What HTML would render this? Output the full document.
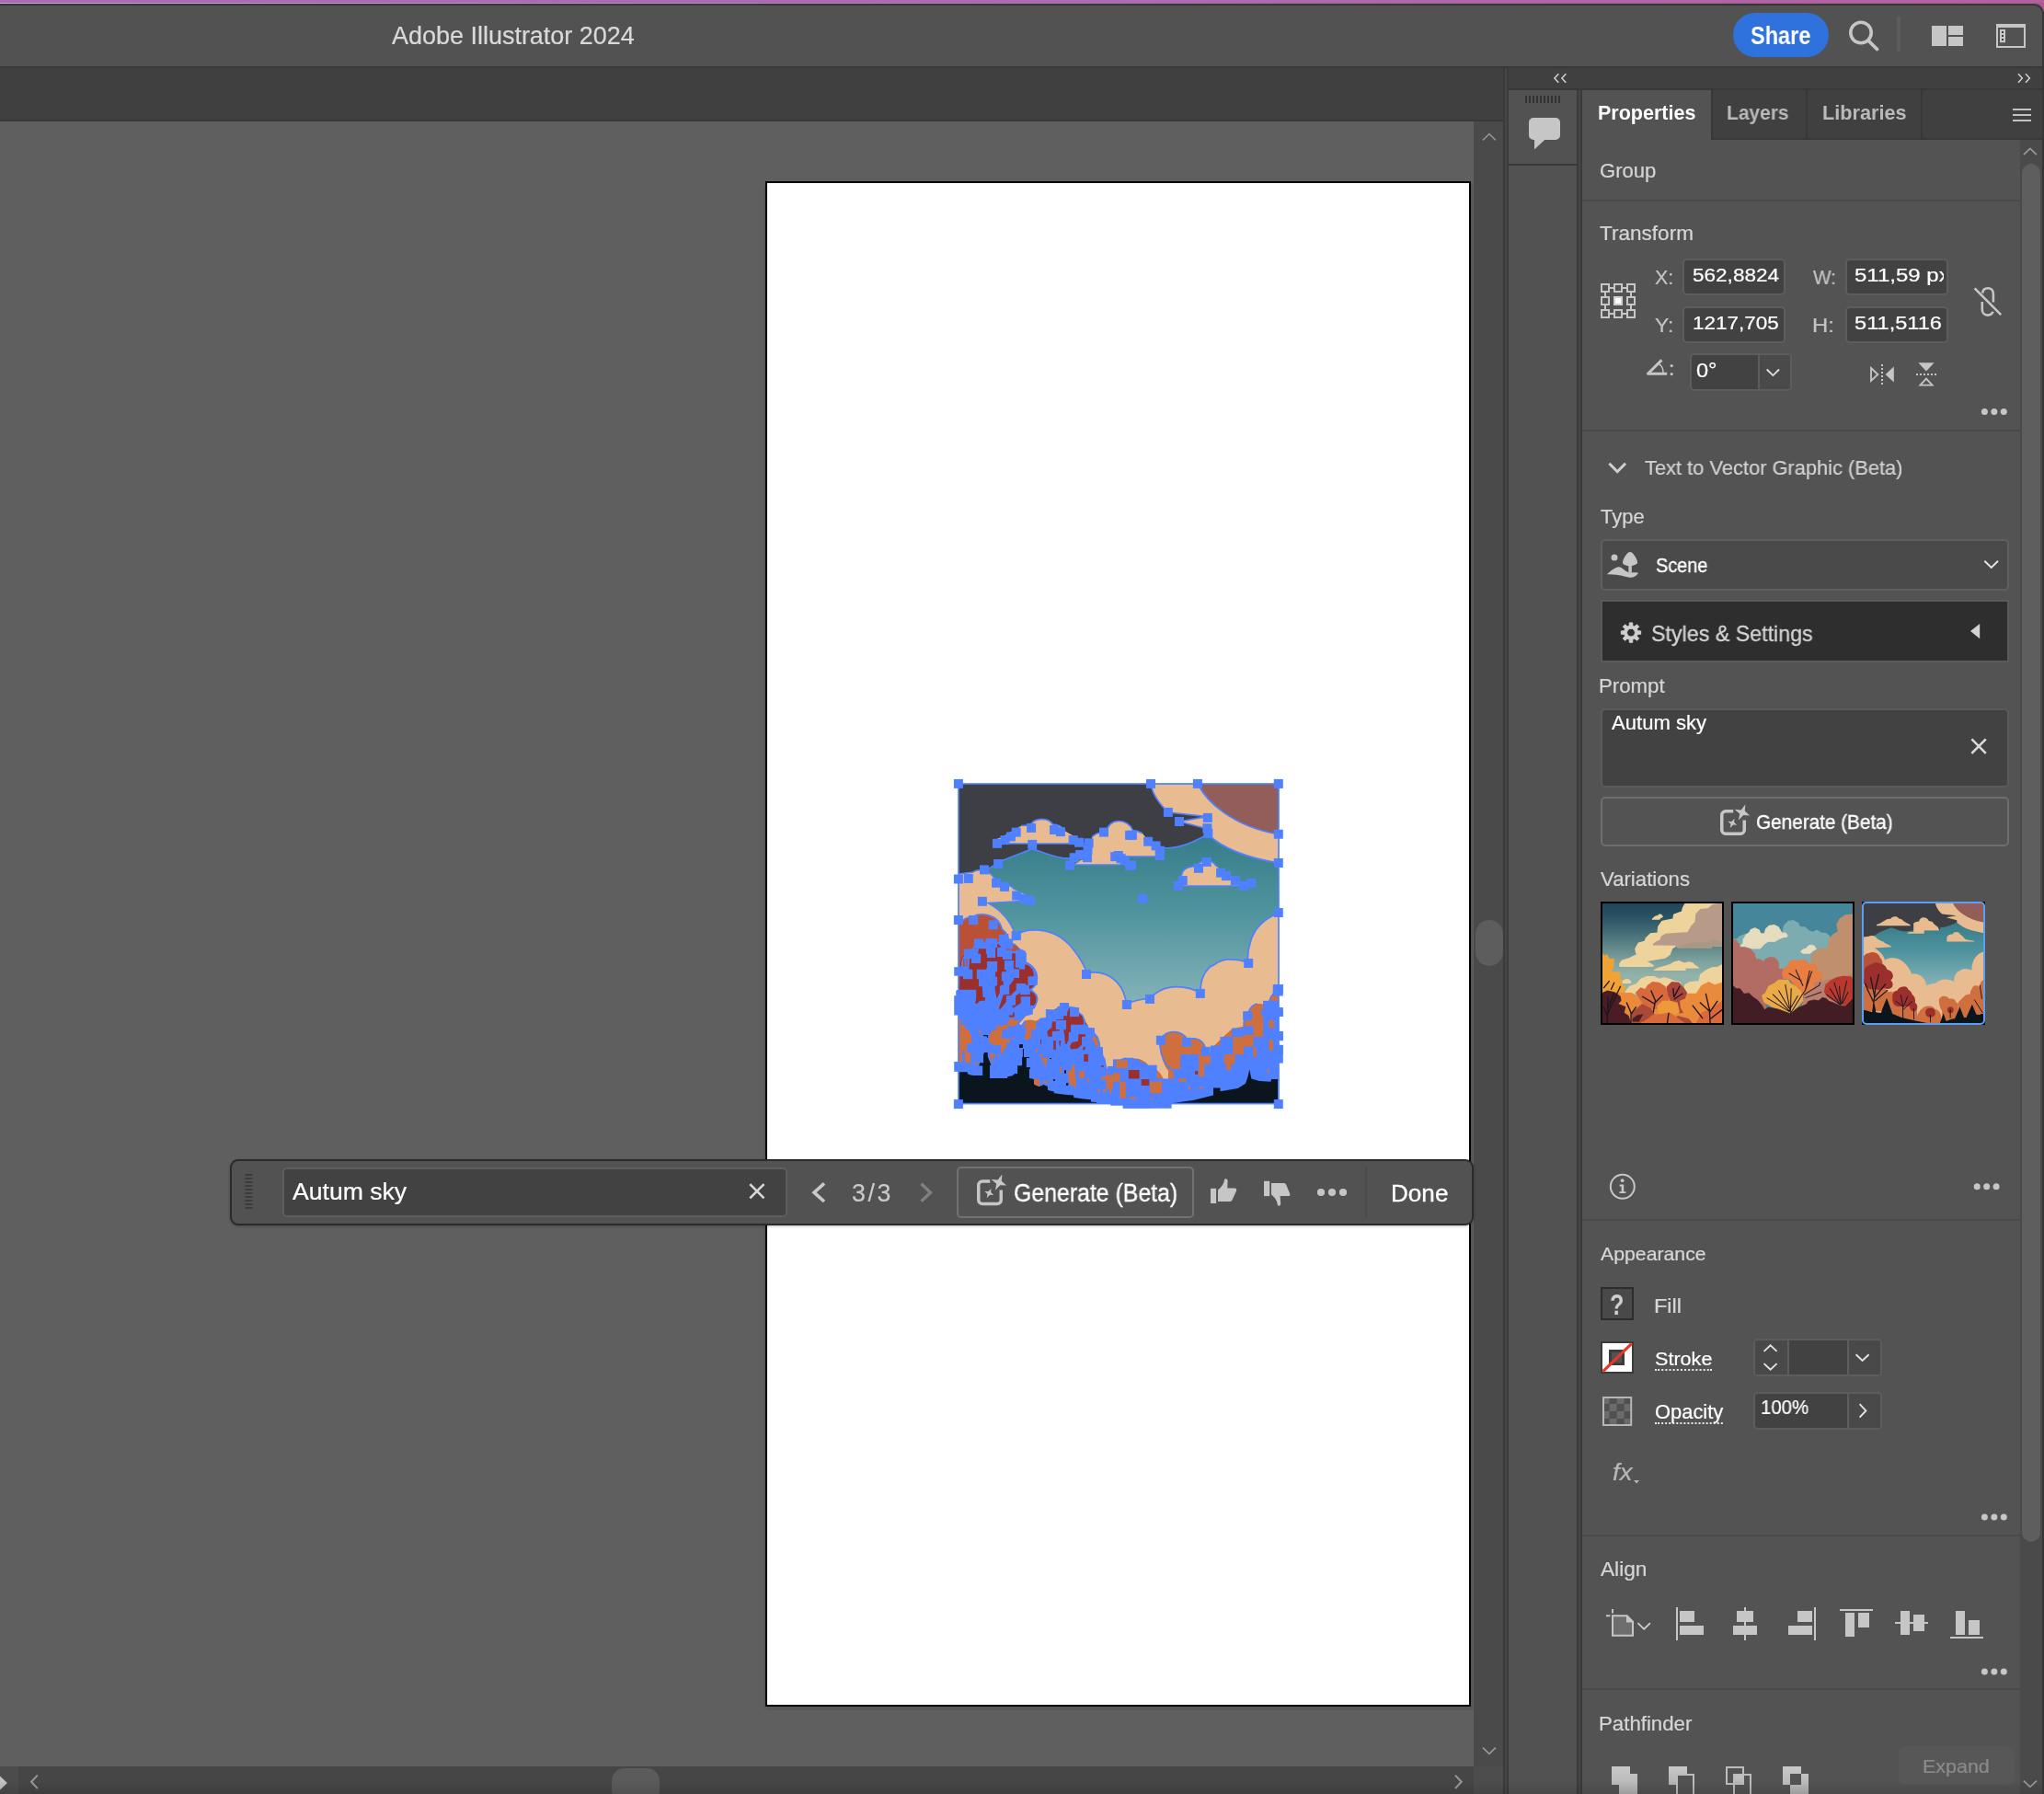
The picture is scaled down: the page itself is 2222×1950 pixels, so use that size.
<!DOCTYPE html>
<html><head><meta charset="utf-8"><title>Adobe Illustrator 2024</title><style>
*{margin:0;padding:0;box-sizing:border-box}
html,body{width:2222px;height:1950px;overflow:hidden;background:#b85f9c}
body{position:relative;font-family:"Liberation Sans",sans-serif}
.a{position:absolute;display:block}
.t{position:absolute;white-space:nowrap;line-height:1;transform-origin:0 0;display:block;will-change:transform}
</style></head><body>
<div class="a" style="left:0px;top:0px;width:2222px;height:16px;background:linear-gradient(90deg,#a86cb8 0%,#aa6eb6 55%,#b0629f 100%)"></div>
<div class="a" style="left:0px;top:2px;width:2222px;height:14px;background:linear-gradient(180deg,rgba(172,86,140,0) 0%,rgba(176,84,140,.9) 16%,rgba(184,94,154,1) 100%)"></div>
<div class="a" style="left:0px;top:3px;width:1500px;height:1px;background:linear-gradient(90deg,rgba(205,175,218,.9),rgba(205,175,218,0))"></div>
<div class="a" style="left:0px;top:4px;width:2222px;height:1946px;background:#525252;border-top:2px solid #353837;border-right:2px solid #363636;border-top-right-radius:11px"></div>
<div class="a" style="left:0px;top:72px;width:2220px;height:2px;background:#383838"></div>
<div class="a" style="left:0px;top:74px;width:1634px;height:56px;background:#404040"></div>
<div class="a" style="left:0px;top:130px;width:1634px;height:2px;background:#383838"></div>
<div class="a" style="left:0px;top:132px;width:1602px;height:1788px;background:#5f5f5f"></div>
<div class="a" style="left:1602px;top:132px;width:32px;height:1788px;background:#4a4a4a"></div>
<div class="a" style="left:1604px;top:1000px;width:30px;height:50px;background:#5d5d5d;border-radius:15px"></div>
<div class="a" style="left:0px;top:1920px;width:1602px;height:30px;background:#464646"></div>
<div class="a" style="left:0px;top:1920px;width:20px;height:30px;background:#4c4c4c"></div>
<div class="a" style="left:665px;top:1922px;width:52px;height:38px;background:#5b5b5b;border-radius:14px"></div>
<div class="a" style="left:1602px;top:1920px;width:32px;height:30px;background:#4d4d4d"></div>
<div class="a" style="left:1634px;top:74px;width:6px;height:1876px;background:#3b3b3b"></div><div class="a" style="left:1636px;top:74px;width:2px;height:1876px;background:#464646"></div>
<div class="a" style="left:1640px;top:74px;width:580px;height:22px;background:#404040"></div>
<div class="a" style="left:1640px;top:96px;width:580px;height:2px;background:#383838"></div>
<div class="a" style="left:1640px;top:98px;width:74px;height:80px;background:#525252"></div>
<div class="a" style="left:1640px;top:178px;width:74px;height:2px;background:#383838"></div>
<div class="a" style="left:1640px;top:180px;width:74px;height:1770px;background:#525252"></div>
<div class="a" style="left:1714px;top:98px;width:6px;height:1852px;background:#3b3b3b"></div><div class="a" style="left:1716px;top:98px;width:2px;height:1852px;background:#464646"></div>
<div class="a" style="left:1720px;top:98px;width:500px;height:1852px;background:#535353"></div>
<span class="t" style="left:425.95px;top:26.26px;font-size:26.74px;color:#d9d9d9;transform:scaleX(1.0084);-webkit-text-stroke:0.22px #d9d9d9;">Adobe Illustrator 2024</span>
<div class="a" style="left:1884px;top:14px;width:104px;height:48px;background:#2f72de;border-radius:24px"></div>
<span class="t" style="left:1902.72px;top:25.94px;font-size:26.89px;color:#ffffff;font-weight:700;transform:scaleX(0.8748);">Share</span>
<svg class="a" style="left:2005px;top:18px;" width="45" height="42" viewBox="2005 18 45 42"><circle cx="2023" cy="35.5" r="11.2" fill="none" stroke="#c6c6c6" stroke-width="3.6"/><path d="M2031 44 L2040.5 53.5" stroke="#c6c6c6" stroke-width="3.8" stroke-linecap="round"/></svg>
<div class="a" style="left:2062px;top:18px;width:4px;height:39px;background:#5c5c5c;border-radius:2px"></div>
<div class="a" style="left:2100px;top:28px;width:16px;height:22px;background:#c6c6c6"></div>
<div class="a" style="left:2118px;top:28px;width:16px;height:10px;background:#c6c6c6"></div>
<div class="a" style="left:2118px;top:40px;width:16px;height:10px;background:#c6c6c6"></div>
<svg class="a" style="left:2168px;top:24px;" width="36" height="30" viewBox="2168 24 36 30"><rect x="2171" y="27" width="30" height="24" fill="none" stroke="#c6c6c6" stroke-width="2"/><rect x="2171" y="27" width="30" height="3" fill="#c6c6c6"/><rect x="2174" y="32" width="6" height="14.2" fill="#c6c6c6"/><rect x="2176" y="34" width="2" height="2" fill="#3c3c3c"/><rect x="2176" y="38" width="2" height="2" fill="#3c3c3c"/><rect x="2176" y="42" width="2" height="2" fill="#3c3c3c"/></svg>
<svg class="a" style="left:1685px;top:76px;" width="25" height="18" viewBox="1685 76 25 18"><path d="M1694.3 80.3 L1689.8999999999999 85.0 L1694.3 89.7 M1702.3 80.3 L1697.8999999999999 85.0 L1702.3 89.7" fill="none" stroke="#d2d2d2" stroke-width="1.5"/></svg>
<svg class="a" style="left:2188px;top:76px;" width="26" height="18" viewBox="2188 76 26 18"><path d="M2194 80.3 L2198.4 85.0 L2194 89.7 M2202 80.3 L2206.4 85.0 L2202 89.7" fill="none" stroke="#d2d2d2" stroke-width="1.5"/></svg>
<svg class="a" style="left:1656px;top:102px;" width="44" height="12" viewBox="1656 102 44 12"><rect x="1658" y="104" width="2" height="8" fill="#343434"/><rect x="1662" y="104" width="2" height="8" fill="#343434"/><rect x="1666" y="104" width="2" height="8" fill="#343434"/><rect x="1670" y="104" width="2" height="8" fill="#343434"/><rect x="1674" y="104" width="2" height="8" fill="#343434"/><rect x="1678" y="104" width="2" height="8" fill="#343434"/><rect x="1682" y="104" width="2" height="8" fill="#343434"/><rect x="1686" y="104" width="2" height="8" fill="#343434"/><rect x="1690" y="104" width="2" height="8" fill="#343434"/><rect x="1694" y="104" width="2" height="8" fill="#343434"/></svg>
<svg class="a" style="left:1658px;top:124px;" width="42" height="42" viewBox="1658 124 42 42"><path d="M1667 128 H1691 a5 5 0 0 1 5 5 V147 a5 5 0 0 1 -5 5 H1679.2 L1668 162.4 V152 H1667 a5 5 0 0 1 -5 -5 V133 a5 5 0 0 1 5 -5 Z" fill="#c6c6c6"/></svg>
<div class="a" style="left:1860px;top:98px;width:360px;height:52px;background:#404040"></div>
<div class="a" style="left:1860px;top:150px;width:360px;height:2px;background:#383838"></div>
<div class="a" style="left:1860px;top:98px;width:2px;height:54px;background:#383838"></div>
<div class="a" style="left:1963px;top:98px;width:2px;height:52px;background:#383838"></div>
<div class="a" style="left:2088px;top:98px;width:2px;height:52px;background:#383838"></div>
<span class="t" style="left:1737.06px;top:112.59px;font-size:21.51px;color:#ffffff;font-weight:700;">Properties</span>
<span class="t" style="left:1877.10px;top:112.59px;font-size:21.51px;color:#b9b9b9;font-weight:700;transform:scaleX(0.9755);">Layers</span>
<span class="t" style="left:1981.05px;top:112.59px;font-size:21.51px;color:#b9b9b9;font-weight:700;transform:scaleX(1.0075);">Libraries</span>
<div class="a" style="left:2188px;top:118px;width:20px;height:2px;background:#c2c2c2"></div>
<div class="a" style="left:2188px;top:124px;width:20px;height:2px;background:#c2c2c2"></div>
<div class="a" style="left:2188px;top:130px;width:20px;height:2px;background:#c2c2c2"></div>
<div class="a" style="left:834px;top:199px;width:767px;height:1660px;background:#575757"></div>
<div class="a" style="left:830px;top:203px;width:2px;height:1654px;background:#575757"></div>
<div class="a" style="left:832px;top:197px;width:767px;height:1658px;background:#ffffff;border:2px solid #000"></div>
<svg class="a" style="left:1606px;top:138px;" width="26" height="22" viewBox="1606 138 26 22"><path d="M1611.9 152.3 L1618.9 145.7 L1625.9 152.3" fill="none" stroke="#8f8f8f" stroke-width="1.7"/></svg>
<svg class="a" style="left:1606px;top:1892px;" width="26" height="22" viewBox="1606 1892 26 22"><path d="M1611.9 1899.7 L1618.9 1906.3 L1625.9 1899.7" fill="none" stroke="#9a9a9a" stroke-width="1.7"/></svg>
<svg class="a" style="left:26px;top:1926px;" width="24" height="24" viewBox="26 1926 24 24"><path d="M40.8 1929.6 L34.0 1936.8 L40.8 1944.0" fill="none" stroke="#989898" stroke-width="2"/></svg>
<svg class="a" style="left:1574px;top:1926px;" width="24" height="24" viewBox="1574 1926 24 24"><path d="M1581.8999999999999 1929.6 L1588.7 1936.8 L1581.8999999999999 1944.0" fill="none" stroke="#989898" stroke-width="2"/></svg>
<svg class="a" style="left:0px;top:1926px;" width="12" height="24" viewBox="0 1926 12 24"><path d="M0 1930.6 L7.9 1938 L0 1945.4 Z" fill="#c2c2c2"/></svg>
<div class="a" style="left:250px;top:1260px;width:1352px;height:72px;background:#525252;border:2px solid #2b2b2b;border-radius:9px;box-shadow:0 1px 3px rgba(0,0,0,.25)"></div>
<svg class="a" style="left:264px;top:1274px;" width="14" height="42" viewBox="264 1274 14 42"><rect x="266.5" y="1276" width="8" height="2" fill="#3c3c3c"/><rect x="266.5" y="1280" width="8" height="2" fill="#3c3c3c"/><rect x="266.5" y="1284" width="8" height="2" fill="#3c3c3c"/><rect x="266.5" y="1288" width="8" height="2" fill="#3c3c3c"/><rect x="266.5" y="1292" width="8" height="2" fill="#3c3c3c"/><rect x="266.5" y="1296" width="8" height="2" fill="#3c3c3c"/><rect x="266.5" y="1300" width="8" height="2" fill="#3c3c3c"/><rect x="266.5" y="1304" width="8" height="2" fill="#3c3c3c"/><rect x="266.5" y="1308" width="8" height="2" fill="#3c3c3c"/><rect x="266.5" y="1312" width="8" height="2" fill="#3c3c3c"/></svg>
<div class="a" style="left:307px;top:1269px;width:549px;height:54px;background:#424242;border:2px solid #5e5e5e;border-radius:5px"></div>
<span class="t" style="left:317.95px;top:1282.80px;font-size:25.87px;color:#ffffff;transform:scaleX(1.0277);-webkit-text-stroke:0.22px #ffffff;">Autum sky</span>
<svg class="a" style="left:812px;top:1284px;" width="22" height="22" viewBox="812 1284 22 22"><path d="M815.3 1287.2 L830.5 1302.4 M830.5 1287.2 L815.3 1302.4" stroke="#d8d8d8" stroke-width="2.6"/></svg>
<svg class="a" style="left:878px;top:1282px;" width="24" height="28" viewBox="878 1282 24 28"><path d="M896.0 1286.4 L885.0 1296.2 L896.0 1306.0" fill="none" stroke="#c9c9c9" stroke-width="3.6"/></svg>
<span class="t" style="left:925.88px;top:1284.36px;font-size:26.74px;color:#c9c9c9;-webkit-text-stroke:0.22px #c9c9c9;letter-spacing:2.66px;">3/3</span>
<svg class="a" style="left:996px;top:1282px;" width="24" height="28" viewBox="996 1282 24 28"><path d="M1001.5 1286.7 L1011.5 1296.2 L1001.5 1305.7" fill="none" stroke="#7f7f7f" stroke-width="3.4"/></svg>
<div class="a" style="left:1040px;top:1268px;width:258px;height:56px;border:2px solid #717171;border-radius:5px"></div>
<svg class="a" style="left:1058px;top:1270px;" width="44" height="48" viewBox="1058 1270 44 48"><path d="M1076.2 1283.95 H1068 a4.25 4.25 0 0 0 -4.25 4.25 V1304.2 a4.25 4.25 0 0 0 4.25 4.25 H1084 a4.25 4.25 0 0 0 4.25 -4.25 V1293.6000000000001" fill="none" stroke="#c6c6c6" stroke-width="3.5"/><path d="M1089.3999999999999 1276.5 L1088.8 1283.8 L1094.1 1288.6 L1087.3 1288.2 L1081.8999999999999 1293.8 L1083.1999999999998 1286.7 L1077.6 1282.0 L1084.8 1282.6 Z" fill="#c6c6c6"/><path d="M1077.4 1291.9 L1077.2 1296.1000000000001 L1080.2 1298.9 L1076.1000000000001 1298.8000000000002 L1072.8000000000002 1302.3000000000002 L1073.5 1297.7 L1070.2 1294.9 L1074.5 1295.1000000000001 Z" fill="#c6c6c6"/></svg>
<span class="t" style="left:1101.75px;top:1284.36px;font-size:26.74px;color:#ffffff;transform:scaleX(0.9293);-webkit-text-stroke:0.35px #ffffff;">Generate (Beta)</span>
<svg class="a" style="left:1312px;top:1276px;" width="38" height="38" viewBox="1312 1276 38 38"><rect x="1316" y="1291.8" width="6.1" height="16.2" fill="#c6c6c6"/><path d="M1324 1306 V1293.6 C1328.5 1290 1330.6 1286 1331 1282.6 C1331.3 1280.6 1334.4 1280.6 1334.6 1283.4 L1334.3 1291.6 H1342.6 C1344 1291.6 1344.6 1293 1344 1294.4 L1339.4 1304.6 C1338.8 1305.8 1338 1306 1337 1306 Z" fill="#c6c6c6"/></svg>
<svg class="a" style="left:1370px;top:1278px;" width="38" height="38" viewBox="1370 1278 38 38"><rect x="1374" y="1283.8" width="6.2" height="16.3" fill="#c6c6c6"/><path d="M1382 1286 H1395.4 C1396.8 1286 1397.6 1286.6 1398.2 1287.8 L1402.2 1297.4 C1402.8 1298.8 1402.2 1300 1400.8 1300 H1391.6 L1392.2 1308.6 C1392.2 1311.2 1389.2 1311.4 1388.8 1309.4 C1388.2 1305.6 1386.6 1302.2 1382 1298.6 Z" fill="#c6c6c6"/></svg>
<svg class="a" style="left:1428px;top:1288px;" width="40" height="16" viewBox="1428 1288 40 16"><circle cx="1436" cy="1296" r="4.1" fill="#c6c6c6"/><circle cx="1448" cy="1296" r="4.1" fill="#c6c6c6"/><circle cx="1460" cy="1296" r="4.1" fill="#c6c6c6"/></svg>
<div class="a" style="left:1484px;top:1269px;width:2px;height:54px;background:#4b4b4b"></div>
<span class="t" style="left:1511.86px;top:1285.35px;font-size:25.58px;color:#ffffff;transform:scaleX(1.0204);-webkit-text-stroke:0.3px #ffffff;">Done</span>
<div class="a" style="left:2196px;top:152px;width:24px;height:1798px;background:#4a4a4a"></div>
<div class="a" style="left:2198px;top:178px;width:20px;height:1498px;background:#5e5e5e;border-radius:10px"></div>
<svg class="a" style="left:2196px;top:156px;" width="24" height="18" viewBox="2196 156 24 18"><path d="M2199.9 168.10000000000002 L2206.9 161.5 L2213.9 168.10000000000002" fill="none" stroke="#9a9a9a" stroke-width="1.7"/></svg>
<svg class="a" style="left:2196px;top:1930px;" width="24" height="18" viewBox="2196 1930 24 18"><path d="M2199.9 1935.7 L2206.9 1942.3 L2213.9 1935.7" fill="none" stroke="#9a9a9a" stroke-width="1.7"/></svg>
<span class="t" style="left:1738.89px;top:174.85px;font-size:21.8px;color:#d6d6d6;transform:scaleX(1.0106);-webkit-text-stroke:0.22px #d6d6d6;">Group</span>
<div class="a" style="left:1720px;top:217px;width:476px;height:2px;background:#4a4a4a"></div>
<span class="t" style="left:1739.49px;top:244.29px;font-size:21.51px;color:#d6d6d6;transform:scaleX(1.0492);-webkit-text-stroke:0.22px #d6d6d6;">Transform</span>
<svg class="a" style="left:1738px;top:306px;" width="42" height="42" viewBox="1738 306 42 42"><rect x="1741" y="309" width="8" height="8" fill="none" stroke="#c6c6c6" stroke-width="2"/><rect x="1741" y="323" width="8" height="8" fill="none" stroke="#c6c6c6" stroke-width="2"/><rect x="1741" y="337" width="8" height="8" fill="none" stroke="#c6c6c6" stroke-width="2"/><rect x="1755" y="309" width="8" height="8" fill="none" stroke="#c6c6c6" stroke-width="2"/><rect x="1755" y="323" width="8" height="8" fill="#fff" stroke="#cfcfcf" stroke-width="2"/><rect x="1755" y="337" width="8" height="8" fill="none" stroke="#c6c6c6" stroke-width="2"/><rect x="1769" y="309" width="8" height="8" fill="none" stroke="#c6c6c6" stroke-width="2"/><rect x="1769" y="323" width="8" height="8" fill="none" stroke="#c6c6c6" stroke-width="2"/><rect x="1769" y="337" width="8" height="8" fill="none" stroke="#c6c6c6" stroke-width="2"/><path d="M1750 313 H1754 M1764 313 H1768" stroke="#c6c6c6" stroke-width="2"/><path d="M1745 318 V322 M1745 332 V336" stroke="#c6c6c6" stroke-width="2"/><path d="M1750 341 H1754 M1764 341 H1768" stroke="#c6c6c6" stroke-width="2"/><path d="M1773 318 V322 M1773 332 V336" stroke="#c6c6c6" stroke-width="2"/></svg>
<span class="t" style="left:1798.72px;top:291.51px;font-size:21.37px;color:#c4c4c4;-webkit-text-stroke:0.22px #c4c4c4;">X:</span>
<span class="t" style="left:1798.70px;top:343.61px;font-size:21.37px;color:#c4c4c4;transform:scaleX(1.0668);-webkit-text-stroke:0.22px #c4c4c4;">Y:</span>
<span class="t" style="left:1970.61px;top:291.51px;font-size:21.37px;color:#c4c4c4;transform:scaleX(0.9715);-webkit-text-stroke:0.22px #c4c4c4;">W:</span>
<span class="t" style="left:1969.55px;top:343.61px;font-size:21.37px;color:#c4c4c4;transform:scaleX(1.1152);-webkit-text-stroke:0.22px #c4c4c4;">H:</span>
<div class="a" style="left:1829px;top:281px;width:112px;height:40px;background:#424242;border:2px solid #5d5d5d;border-radius:5px;overflow:hidden"></div>
<div class="a" style="left:1829px;top:333px;width:112px;height:40px;background:#424242;border:2px solid #5d5d5d;border-radius:5px;overflow:hidden"></div>
<div class="a" style="left:2006px;top:281px;width:112px;height:40px;background:#424242;border:2px solid #5d5d5d;border-radius:5px;overflow:hidden"></div>
<div class="a" style="left:2006px;top:333px;width:112px;height:40px;background:#424242;border:2px solid #5d5d5d;border-radius:5px;overflow:hidden"></div>
<span class="t" style="left:1840.30px;top:288.88px;font-size:20.93px;color:#ffffff;transform:scaleX(1.0775);-webkit-text-stroke:0.22px #ffffff;">562,8824</span>
<span class="t" style="left:1839.99px;top:340.88px;font-size:20.93px;color:#ffffff;transform:scaleX(1.0751);-webkit-text-stroke:0.22px #ffffff;">1217,705</span>
<div class="a" style="left:2008px;top:283px;width:105px;height:36px;overflow:hidden"><span class="t" style="left:8.44px;top:5.88px;font-size:20.93px;color:#ffffff;transform:scaleX(1.1475);-webkit-text-stroke:0.22px #ffffff;">511,59 px</span></div>
<span class="t" style="left:2016.45px;top:340.88px;font-size:20.93px;color:#ffffff;transform:scaleX(1.1282);-webkit-text-stroke:0.22px #ffffff;">511,5116</span>
<svg class="a" style="left:2140px;top:306px;" width="42" height="44" viewBox="2140 306 42 44"><path d="M2155.2 318.6 C2155.6 315 2158 313.3 2161 313.3 C2164.6 313.3 2166.9 315.8 2166.9 319.4 V328.6 M2154.8 328 V336.6 C2154.8 340.2 2157.2 342.6 2160.8 342.6 C2163.6 342.6 2165.6 341.2 2166.6 338.8" fill="none" stroke="#c6c6c6" stroke-width="2.6"/><path d="M2146.6 313.4 L2175.2 342.2" stroke="#c6c6c6" stroke-width="2.6"/></svg>
<svg class="a" style="left:1786px;top:386px;" width="36" height="26" viewBox="1786 386 36 26"><path d="M1806.4 391.4 L1791.4 406.2 H1812.2" fill="none" stroke="#c6c6c6" stroke-width="3" stroke-linejoin="round"/><path d="M1803 395.2 C1806.4 397.4 1808 400.6 1808 405" fill="none" stroke="#c6c6c6" stroke-width="1.4"/><circle cx="1817.2" cy="397.6" r="1.6" fill="#c6c6c6"/><circle cx="1817.2" cy="406.6" r="1.6" fill="#c6c6c6"/></svg>
<div class="a" style="left:1837px;top:384px;width:111px;height:41px;background:#424242;border:2px solid #5d5d5d;border-radius:5px;overflow:hidden"><div class="a" style="left:72px;top:0px;width:37px;height:40px;background:#4a4a4a;border-left:2px solid #5d5d5d"></div></div>
<span class="t" style="left:1843.58px;top:391.94px;font-size:21.22px;color:#ffffff;transform:scaleX(1.1108);-webkit-text-stroke:0.22px #ffffff;">0°</span>
<svg class="a" style="left:1916px;top:396px;" width="24" height="18" viewBox="1916 396 24 18"><path d="M1920.7 401.5 L1927.4 408.1 L1934.1000000000001 401.5" fill="none" stroke="#e2e2e2" stroke-width="1.8"/></svg>
<svg class="a" style="left:2030px;top:392px;" width="34" height="30" viewBox="2030 392 34 30"><path d="M2034 400 L2041.4 407 L2034 414 Z" fill="none" stroke="#c6c6c6" stroke-width="1.8"/><path d="M2058.8 398.6 V415.4 L2049.6 407 Z" fill="#c6c6c6"/><rect x="2045" y="396" width="2" height="2" fill="#c6c6c6"/><rect x="2045" y="400" width="2" height="2" fill="#c6c6c6"/><rect x="2045" y="404" width="2" height="2" fill="#c6c6c6"/><rect x="2045" y="408" width="2" height="2" fill="#c6c6c6"/><rect x="2045" y="412" width="2" height="2" fill="#c6c6c6"/><rect x="2045" y="416" width="2" height="2" fill="#c6c6c6"/></svg>
<svg class="a" style="left:2080px;top:390px;" width="30" height="34" viewBox="2080 390 30 34"><path d="M2085.4 394.2 H2102.6 L2094 403.6 Z" fill="#c6c6c6"/><path d="M2087.4 418.6 L2094 411.6 L2100.6 418.6 Z" fill="none" stroke="#c6c6c6" stroke-width="1.8"/><rect x="2083" y="406" width="2" height="2" fill="#c6c6c6"/><rect x="2087" y="406" width="2" height="2" fill="#c6c6c6"/><rect x="2091" y="406" width="2" height="2" fill="#c6c6c6"/><rect x="2095" y="406" width="2" height="2" fill="#c6c6c6"/><rect x="2099" y="406" width="2" height="2" fill="#c6c6c6"/><rect x="2103" y="406" width="2" height="2" fill="#c6c6c6"/></svg>
<svg class="a" style="left:2151px;top:441px;" width="36" height="13" viewBox="2151 441 36 13"><circle cx="2157.40" cy="447.6" r="3.5" fill="#c6c6c6"/><circle cx="2167.85" cy="447.6" r="3.5" fill="#c6c6c6"/><circle cx="2178.30" cy="447.6" r="3.5" fill="#c6c6c6"/></svg>
<div class="a" style="left:1720px;top:467px;width:476px;height:2px;background:#4a4a4a"></div>
<svg class="a" style="left:1744px;top:498px;" width="28" height="20" viewBox="1744 498 28 20"><path d="M1749.4 503.7 L1758.2 512.7 L1767.0 503.7" fill="none" stroke="#d0d0d0" stroke-width="3"/></svg>
<span class="t" style="left:1787.81px;top:498.10px;font-size:22.09px;color:#d2d2d2;transform:scaleX(0.9895);-webkit-text-stroke:0.22px #d2d2d2;">Text to Vector Graphic (Beta)</span>
<span class="t" style="left:1739.51px;top:551.45px;font-size:21.8px;color:#d6d6d6;transform:scaleX(1.0086);-webkit-text-stroke:0.22px #d6d6d6;">Type</span>
<div class="a" style="left:1740px;top:586px;width:444px;height:56px;background:#4a4a4a;border:2px solid #5f5f5f;border-radius:5px;overflow:hidden"></div>
<svg class="a" style="left:1744px;top:596px;" width="40" height="36" viewBox="1744 596 40 36"><circle cx="1755" cy="606" r="3.5" fill="#c6c6c6"/><path d="M1772 600 C1775.4 600 1780 608 1780 611.4 C1780 613.6 1776.6 614 1773.8 615 V622.6 H1770.4 V615.2 C1767.4 614.4 1764 613.6 1764 611.4 C1764 608 1768.6 600 1772 600 Z" fill="#c6c6c6"/><path d="M1746.6 624.2 C1752 620 1756 616.2 1759.6 616.2 C1763.6 616.2 1766.6 621.6 1771 622.2 C1775 622.6 1778 621.8 1781.2 622.8 C1779 626 1776 628 1772.6 627.8 C1766 627.2 1760 623.6 1746.6 624.2 Z" fill="#c6c6c6"/></svg>
<span class="t" style="left:1799.90px;top:604.12px;font-size:21.95px;color:#ffffff;transform:scaleX(0.9060);-webkit-text-stroke:0.35px #ffffff;">Scene</span>
<svg class="a" style="left:2152px;top:604px;" width="26" height="20" viewBox="2152 604 26 20"><path d="M2157.3999999999996 609.8 L2164.7 617.0 L2172.0 609.8" fill="none" stroke="#e6e6e6" stroke-width="1.9"/></svg>
<div class="a" style="left:1740px;top:652px;width:444px;height:68px;background:#2e2e2e;border:2px solid #5a5a5a"></div>
<svg class="a" style="left:1760px;top:674px;" width="28" height="28" viewBox="1760 674 28 28"><path d="M1783.67 685.91 L1783.67 689.29 L1780.39 689.37 L1779.48 691.57 L1781.74 693.95 L1779.35 696.34 L1776.97 694.08 L1774.77 694.99 L1774.69 698.27 L1771.31 698.27 L1771.23 694.99 L1769.03 694.08 L1766.65 696.34 L1764.26 693.95 L1766.52 691.57 L1765.61 689.37 L1762.33 689.29 L1762.33 685.91 L1765.61 685.83 L1766.52 683.63 L1764.26 681.25 L1766.65 678.86 L1769.03 681.12 L1771.23 680.21 L1771.31 676.93 L1774.69 676.93 L1774.77 680.21 L1776.97 681.12 L1779.35 678.86 L1781.74 681.25 L1779.48 683.63 L1780.39 685.83 Z M1777.4 687.6 a4.4 4.4 0 1 0 -8.8 0 a4.4 4.4 0 1 0 8.8 0 Z" fill="#cfcfcf" fill-rule="evenodd" stroke="#cfcfcf" stroke-width="1" stroke-linejoin="round"/></svg>
<span class="t" style="left:1795.34px;top:677.27px;font-size:24.13px;color:#d4d4d4;transform:scaleX(0.9632);-webkit-text-stroke:0.3px #d4d4d4;">Styles &amp; Settings</span>
<svg class="a" style="left:2138px;top:674px;" width="20" height="26" viewBox="2138 674 20 26"><path d="M2152.2 678 V694.2 L2142 686.1 Z" fill="#d2d2d2"/></svg>
<span class="t" style="left:1738.18px;top:735.61px;font-size:21.37px;color:#d6d6d6;transform:scaleX(1.0407);-webkit-text-stroke:0.22px #d6d6d6;">Prompt</span>
<div class="a" style="left:1740px;top:770px;width:444px;height:86px;background:#424242;border:2px solid #5b5b5b;border-radius:5px;overflow:hidden"></div>
<span class="t" style="left:1752.16px;top:774.50px;font-size:22.09px;color:#ffffff;-webkit-text-stroke:0.22px #ffffff;">Autum sky</span>
<svg class="a" style="left:2140px;top:800px;" width="24" height="24" viewBox="2140 800 24 24"><path d="M2143.4 803.4 L2158.8 818.8 M2158.8 803.4 L2143.4 818.8" stroke="#dadada" stroke-width="2.6"/></svg>
<div class="a" style="left:1740px;top:866px;width:444px;height:54px;border:2px solid #6e6e6e;border-radius:5px"></div>
<svg class="a" style="left:1866px;top:868px;" width="40" height="44" viewBox="1866 868 40 44"><path d="M1884.2 881.75 H1876 a4.25 4.25 0 0 0 -4.25 4.25 V902 a4.25 4.25 0 0 0 4.25 4.25 H1892 a4.25 4.25 0 0 0 4.25 -4.25 V891.4" fill="none" stroke="#c6c6c6" stroke-width="3.5"/><path d="M1897.3999999999999 874.3000000000001 L1896.8 881.6 L1902.1 886.4 L1895.3 886.0 L1889.8999999999999 891.6 L1891.1999999999998 884.5 L1885.6 879.8000000000001 L1892.8 880.4 Z" fill="#c6c6c6"/><path d="M1885.4 889.7 L1885.2 893.9000000000001 L1888.2 896.7 L1884.1000000000001 896.6 L1880.8000000000002 900.1 L1881.5 895.5 L1878.2 892.7 L1882.5 892.9000000000001 Z" fill="#c6c6c6"/></svg>
<span class="t" style="left:1909.46px;top:882.92px;font-size:21.95px;color:#ffffff;transform:scaleX(0.9449);-webkit-text-stroke:0.35px #ffffff;">Generate (Beta)</span>
<span class="t" style="left:1739.90px;top:945.26px;font-size:21.66px;color:#d6d6d6;transform:scaleX(1.0241);-webkit-text-stroke:0.22px #d6d6d6;">Variations</span>
<svg class="a" style="left:1748px;top:1274px;" width="32" height="32" viewBox="1748 1274 32 32"><circle cx="1763.8" cy="1289.8" r="13" fill="none" stroke="#c6c6c6" stroke-width="2"/><circle cx="1763.6" cy="1283.2" r="1.9" fill="#c6c6c6"/><path d="M1760.6 1287.6 H1765.2 V1295.2 H1767.4 V1297 H1760.4 V1295.2 H1762.6 V1289.4 H1760.6 Z" fill="#c6c6c6"/></svg>
<svg class="a" style="left:2143px;top:1283px;" width="36" height="13" viewBox="2143 1283 36 13"><circle cx="2149.20" cy="1289.8" r="3.5" fill="#c6c6c6"/><circle cx="2159.65" cy="1289.8" r="3.5" fill="#c6c6c6"/><circle cx="2170.10" cy="1289.8" r="3.5" fill="#c6c6c6"/></svg>
<div class="a" style="left:1720px;top:1325px;width:476px;height:2px;background:#4a4a4a"></div>
<span class="t" style="left:1739.96px;top:1352.98px;font-size:20.93px;color:#d6d6d6;transform:scaleX(1.0160);-webkit-text-stroke:0.22px #d6d6d6;">Appearance</span>
<div class="a" style="left:1740px;top:1399px;width:36px;height:36px;background:#494949;border:2px solid #2c2c2c"></div>
<span class="t" style="left:1750.04px;top:1403.48px;font-size:30.5px;color:#d0d0d0;font-weight:700;transform:scaleX(0.8272);">?</span>
<span class="t" style="left:1798.47px;top:1410.49px;font-size:21.51px;color:#d6d6d6;transform:scaleX(1.0917);-webkit-text-stroke:0.22px #d6d6d6;">Fill</span>
<svg class="a" style="left:1738px;top:1456px;" width="40" height="40" viewBox="1738 1456 40 40"><rect x="1741" y="1459" width="34" height="33" fill="#ffffff" stroke="#3a3a3a" stroke-width="2"/><rect x="1749" y="1467" width="17" height="17" fill="#3c3c3c"/><rect x="1752" y="1470" width="11" height="11" fill="#525252"/><path d="M1742.6 1490.6 L1773.8 1460.4" stroke="#e8362a" stroke-width="3.2"/></svg>
<span class="t" style="left:1799.42px;top:1466.58px;font-size:20.93px;color:#ffffff;transform:scaleX(1.0322);-webkit-text-stroke:0.22px #ffffff;border-bottom:2px dotted #e6e6e6;padding-bottom:0.3px;">Stroke</span>
<div class="a" style="left:1906px;top:1455px;width:140px;height:41px;background:#424242;border:2px solid #5d5d5d;border-radius:5px;overflow:hidden"><div class="a" style="left:0px;top:0px;width:37px;height:40px;background:#494949;border-right:2px solid #5d5d5d"></div><div class="a" style="left:100px;top:0px;width:38px;height:40px;background:#494949;border-left:2px solid #5d5d5d"></div></div>
<svg class="a" style="left:1912px;top:1458px;" width="28" height="36" viewBox="1912 1458 28 36"><path d="M1917.6 1468.8999999999999 L1924.6 1462.3 L1931.6 1468.8999999999999" fill="none" stroke="#e4e4e4" stroke-width="1.8"/><path d="M1917.6 1482.1000000000001 L1924.6 1488.7 L1931.6 1482.1000000000001" fill="none" stroke="#e4e4e4" stroke-width="1.8"/></svg>
<svg class="a" style="left:2014px;top:1464px;" width="26" height="24" viewBox="2014 1464 26 24"><path d="M2017.6 1472.1999999999998 L2024.6 1479.0 L2031.6 1472.1999999999998" fill="none" stroke="#e4e4e4" stroke-width="1.9"/></svg>
<svg class="a" style="left:1740px;top:1516px;" width="36" height="36" viewBox="1740 1516 36 36"><rect x="1743" y="1519" width="30.2" height="30" fill="#505050"/><rect x="1744" y="1520" width="5.6" height="6.0" fill="#6b6b6b"/><rect x="1744" y="1534" width="5.6" height="8.0" fill="#6b6b6b"/><rect x="1749.6" y="1526" width="8.0" height="8.0" fill="#6b6b6b"/><rect x="1749.6" y="1542" width="8.0" height="6.0" fill="#6b6b6b"/><rect x="1757.6" y="1520" width="8.0" height="6.0" fill="#6b6b6b"/><rect x="1757.6" y="1534" width="8.0" height="8.0" fill="#6b6b6b"/><rect x="1765.6" y="1526" width="6.6" height="8.0" fill="#6b6b6b"/><rect x="1765.6" y="1542" width="6.6" height="6.0" fill="#6b6b6b"/><rect x="1743" y="1519" width="30.2" height="30" fill="none" stroke="#b6b6b6" stroke-width="2"/></svg>
<span class="t" style="left:1799.36px;top:1524.06px;font-size:21.66px;color:#ffffff;transform:scaleX(1.0116);-webkit-text-stroke:0.22px #ffffff;border-bottom:2px dotted #e6e6e6;padding-bottom:0.2px;">Opacity</span>
<div class="a" style="left:1906px;top:1513px;width:140px;height:41px;background:#424242;border:2px solid #5d5d5d;border-radius:5px;overflow:hidden"><div class="a" style="left:100px;top:0px;width:38px;height:40px;background:#494949;border-left:2px solid #5d5d5d"></div></div>
<span class="t" style="left:1914.25px;top:1520.41px;font-size:21.37px;color:#ffffff;transform:scaleX(0.9528);-webkit-text-stroke:0.22px #ffffff;">100%</span>
<svg class="a" style="left:2014px;top:1520px;" width="24" height="28" viewBox="2014 1520 24 28"><path d="M2021.6 1526.2 L2028.4 1533.4 L2021.6 1540.6000000000001" fill="none" stroke="#e4e4e4" stroke-width="1.9"/></svg>
<span class="t" style="left:1753.07px;top:1587.47px;font-size:26.5px;color:#b8b8b8;font-style:italic;transform:scaleX(1.0392);-webkit-text-stroke:0.22px #b8b8b8;">fx</span>
<svg class="a" style="left:1775px;top:1606px;" width="10" height="8" viewBox="1775 1606 10 8"><path d="M1776.2 1609 H1782 L1779.1 1612.6 Z" fill="#b8b8b8"/></svg>
<svg class="a" style="left:2151px;top:1642px;" width="36" height="13" viewBox="2151 1642 36 13"><circle cx="2157.40" cy="1648.9" r="3.5" fill="#c6c6c6"/><circle cx="2167.85" cy="1648.9" r="3.5" fill="#c6c6c6"/><circle cx="2178.30" cy="1648.9" r="3.5" fill="#c6c6c6"/></svg>
<div class="a" style="left:1720px;top:1668px;width:476px;height:2px;background:#4a4a4a"></div>
<span class="t" style="left:1739.96px;top:1695.45px;font-size:21.8px;color:#d6d6d6;transform:scaleX(1.0400);-webkit-text-stroke:0.22px #d6d6d6;">Align</span>
<svg class="a" style="left:1744px;top:1746px;" width="54" height="36" viewBox="1744 1746 54 36"><path d="M1753 1756.2 H1768.6 L1775 1762.6 V1777.8 H1753 Z" fill="#6e6e6e" stroke="#c6c6c6" stroke-width="2"/><path d="M1768 1756 V1763.4 H1775.4 Z" fill="#c6c6c6"/><path d="M1746 1756.2 H1750.4 M1753 1749 V1753.4" stroke="#c6c6c6" stroke-width="2"/><path d="M1780.4 1764.1000000000001 L1787.2 1770.7 L1794.0 1764.1000000000001" fill="none" stroke="#cfcfcf" stroke-width="1.7"/></svg>
<svg class="a" style="left:1820px;top:1745px;" width="36" height="40" viewBox="1820 1745 36 40"><rect x="1822" y="1747" width="2" height="36" fill="#c6c6c6"/><rect x="1826" y="1751" width="16" height="12" fill="#c6c6c6"/><rect x="1826" y="1767" width="26" height="10" fill="#c6c6c6"/></svg>
<svg class="a" style="left:1880px;top:1745px;" width="34" height="40" viewBox="1880 1745 34 40"><rect x="1896" y="1747" width="2" height="36" fill="#c6c6c6"/><rect x="1888" y="1751" width="18" height="12" fill="#c6c6c6"/><rect x="1884" y="1767" width="26" height="10" fill="#c6c6c6"/></svg>
<svg class="a" style="left:1940px;top:1745px;" width="38" height="40" viewBox="1940 1745 38 40"><rect x="1972" y="1747" width="2" height="36" fill="#c6c6c6"/><rect x="1954" y="1751" width="16" height="12" fill="#c6c6c6"/><rect x="1944" y="1767" width="26" height="10" fill="#c6c6c6"/></svg>
<svg class="a" style="left:1998px;top:1745px;" width="40" height="40" viewBox="1998 1745 40 40"><rect x="2000" y="1749" width="36" height="2" fill="#c6c6c6"/><rect x="2006" y="1753" width="10" height="26" fill="#c6c6c6"/><rect x="2020" y="1753" width="12" height="16" fill="#c6c6c6"/></svg>
<svg class="a" style="left:2058px;top:1745px;" width="40" height="40" viewBox="2058 1745 40 40"><rect x="2060" y="1763" width="36" height="2" fill="#c6c6c6"/><rect x="2066" y="1751" width="10" height="26" fill="#c6c6c6"/><rect x="2080" y="1755" width="12" height="18" fill="#c6c6c6"/></svg>
<svg class="a" style="left:2118px;top:1745px;" width="40" height="40" viewBox="2118 1745 40 40"><rect x="2120" y="1779" width="36" height="2" fill="#c6c6c6"/><rect x="2126" y="1751" width="10" height="26" fill="#c6c6c6"/><rect x="2140" y="1761" width="12" height="16" fill="#c6c6c6"/></svg>
<svg class="a" style="left:2151px;top:1811px;" width="36" height="13" viewBox="2151 1811 36 13"><circle cx="2157.40" cy="1817" r="3.5" fill="#c6c6c6"/><circle cx="2167.85" cy="1817" r="3.5" fill="#c6c6c6"/><circle cx="2178.30" cy="1817" r="3.5" fill="#c6c6c6"/></svg>
<div class="a" style="left:1720px;top:1835px;width:476px;height:2px;background:#4a4a4a"></div>
<span class="t" style="left:1738.18px;top:1863.26px;font-size:21.66px;color:#d6d6d6;transform:scaleX(1.0268);-webkit-text-stroke:0.22px #d6d6d6;">Pathfinder</span>
<svg class="a" style="left:1750px;top:1918px;" width="220" height="32" viewBox="1750 1918 220 32"><defs><linearGradient id="pfg" x1="0" y1="0" x2="0" y2="1"><stop offset="0" stop-color="#c8c8c8"/><stop offset="1" stop-color="#b2b2b2"/></linearGradient></defs><path d="M1752 1920 H1772 V1928 H1780 V1950 H1760 V1940 H1752 Z" fill="url(#pfg)"/><rect x="1814" y="1920" width="20" height="20" fill="url(#pfg)"/><rect x="1823" y="1929" width="18" height="22" fill="#535353" stroke="#bcbcbc" stroke-width="2"/><rect x="1885" y="1929" width="10" height="10" fill="url(#pfg)"/><rect x="1877" y="1921" width="18" height="18" fill="none" stroke="#bcbcbc" stroke-width="2"/><rect x="1885" y="1929" width="18" height="22" fill="none" stroke="#bcbcbc" stroke-width="2"/><path d="M1938 1920 H1958 V1928 H1966 V1950 H1946 V1940 H1938 Z M1946 1928 V1940 H1958 V1928 Z" fill="url(#pfg)" fill-rule="evenodd"/></svg>
<div class="a" style="left:2064px;top:1898px;width:126px;height:42px;background:#575757;border-radius:7px"></div>
<span class="t" style="left:2090.24px;top:1910.13px;font-size:20.64px;color:#8b8b8b;transform:scaleX(1.0406);-webkit-text-stroke:0.22px #8b8b8b;">Expand</span>
<svg class="a" style="left:1030px;top:840px;" width="380" height="372" viewBox="1030 840 380 372"><defs><linearGradient id="msky" x1="0" y1="905" x2="0" y2="1095" gradientUnits="userSpaceOnUse"><stop offset="0" stop-color="#357c89"/><stop offset="0.45" stop-color="#4f939d"/><stop offset="1" stop-color="#87b4b9"/></linearGradient><clipPath id="mclip"><rect x="1042" y="852" width="348" height="348"/></clipPath></defs><g clip-path="url(#mclip)"><rect x="1042" y="852" width="348" height="348" fill="#3d3f44"/><path d="M1042 962 L1070 947 L1090 935.3 L1122.2 922.6 C1130 925 1140 930 1155 932.7 L1166 933.2 L1190 930 L1263 931 L1265 921.6 C1280 923 1297 916 1313.5 906.5 C1325 918 1345 931 1390 938 V1110 H1042 Z" fill="url(#msky)"/><path d="M1251 852 C1252 860 1258 872 1270 883 L1312 887.6 L1282 893 L1313 901 L1313.5 907.5 C1325 918 1345 931 1390 938 V852 Z" fill="#e8bc90"/><path d="M1302 852 C1312 872 1340 898 1390 907 V852 Z" fill="#935d5a"/><path d="M1080 917 L1079 913.5 L1089 910 L1100 903.6 L1110.5 897.4 L1120 897 C1122 893 1127 890.4 1132.8 890.4 C1138 890.4 1142 892 1144.4 896 C1150 896 1155 899 1158 903.5 L1166 908 L1176 913 L1179 917 Z" fill="#e8bc90"/><path d="M1168 940 L1175 935 L1187 935 L1187 910 C1190 906 1196 904.5 1203 904 C1204 897 1209 892.5 1216 892.5 C1224 892.5 1229 897 1231.5 902.6 C1236 903 1239.5 904.4 1241.8 905.7 L1247 912 L1258 921 L1262.5 931 L1218 931 L1218 940 Z" fill="#e8bc90"/><path d="M1284 963 L1284 952 C1285 946 1290 941.8 1297 941.8 L1301 941.4 C1303 937.6 1307 935.3 1311.7 935.3 C1317 935.3 1320.4 938 1322.4 941.7 L1328 946 L1338 956.5 L1350 959.4 L1364 961.4 L1364 963 Z" fill="#e8bc90"/><path d="M1042 950 L1057.5 948 C1060 946 1064 945.4 1068 946 C1074 947 1078 950 1080.8 954.4 L1093.6 961.8 C1098 962 1101 964 1103 967 L1114.7 972.4 L1124.3 978.8 L1074 981.6 C1088 989 1099 1002 1104 1016.6 L1110 1200 H1042 Z" fill="#e8bc90"/><path d="M1104 1016.6 C1110 1012 1120 1010.4 1128 1010.9 C1145 1012 1158 1021 1166 1031 C1174 1041 1179 1050 1181.7 1057.7 C1190 1056 1196 1057 1201 1058.9 C1212 1063 1219 1072 1221.4 1079 L1225 1090.9 C1232 1088 1241 1086 1250.3 1085 C1258 1077 1268 1072.6 1279 1072.6 C1289 1072.6 1298 1075 1305 1079.4 C1305 1070 1306.5 1064 1308.6 1060 C1312 1053 1316 1050 1320 1048.6 C1326 1044 1331 1042.9 1336 1042.9 C1344 1042.9 1351 1044 1356.6 1046.3 C1356 1038 1357 1031 1358.9 1025.7 C1361 1017 1365 1010 1370.3 1005 C1375 1000 1382 995.5 1390 992.6 V1200 H1100 Z" fill="#e8bc90"/><path d="M1042 1006 C1046 999 1052 996.5 1058 996.5 C1062 993.6 1070 993 1076 995.4 C1084 998 1088 1004 1089.4 1010 C1095 1014 1098 1022 1096 1030 V1086 H1042 Z" fill="#bb5134"/><path d="M1042 1160 V1092 C1060 1086 1090 1090 1104 1100 C1112 1104 1117 1112 1115 1122 L1108 1136 L1100 1166 H1042 Z" fill="#cf6f3d"/><path d="M1044 1046 C1046 1036 1056 1030 1064 1030 C1070 1023 1082 1022 1090 1027 C1100 1028 1108 1036 1110 1044.6 C1120 1046 1127.4 1054 1127.4 1063 C1127.4 1070 1123 1074 1120.4 1075.4 C1127 1080 1128.4 1090 1124 1096 C1118 1102 1108 1102 1100 1098 C1094 1104 1084 1106 1076 1101 C1066 1104 1052 1100 1046 1092 C1041 1084 1041 1074 1044 1066 Z" fill="#9a2f2c"/><path d="M1104 1120 C1108 1110 1118 1106 1126 1110 C1134 1104 1146 1108 1150 1116 L1196 1150 L1200 1200 H1100 Z" fill="#cf6f3d"/><path d="M1126 1126 C1124 1116 1130 1108 1140 1105 C1142 1099 1150 1093.5 1158 1094 C1165 1093 1170 1097 1172 1103 C1178 1106 1181 1111 1183 1117 C1190 1122 1193 1130 1192 1137 C1192 1146 1184 1152 1176 1151 L1140 1152 C1130 1150 1124 1140 1126 1126 Z" fill="#9a2f2c"/><ellipse cx="1187" cy="1153" rx="11" ry="13" fill="#9a2f2c"/><path d="M1194 1200 C1196 1170 1212 1150 1232 1150.6 C1240 1150 1246 1154 1250 1160 C1258 1160 1266 1170 1268 1184 L1270 1200 Z" fill="#cf6f3d"/><path d="M1222 1172 C1220 1162 1228 1155 1236 1157 C1244 1155 1251 1162 1250 1170 C1251 1178 1244 1184 1236 1183 C1228 1184 1223 1179 1222 1172 Z" fill="#9a2f2c"/><path d="M1261 1137 C1260 1128 1267 1121.6 1275.7 1121.6 C1283 1121.6 1288 1125 1290.6 1130 C1294 1128.6 1297 1128.6 1300 1129 C1305 1130 1309 1134 1310 1138.6 L1316 1144 L1316 1200 H1270 V1164 C1265 1158 1262 1148 1261 1137 Z" fill="#cf6f3d"/><ellipse cx="1294.5" cy="1162" rx="9" ry="9.5" fill="#9a2f2c"/><path d="M1316 1144 L1320 1136.6 L1327.6 1129 L1339 1118.6 L1352 1115.4 C1352 1108 1354 1104 1357 1100.5 C1359 1095 1362 1091.6 1366.8 1091 C1372 1090.4 1376 1092 1379 1095 C1379 1088 1382 1080 1390 1075 V1200 H1316 Z" fill="#cf6f3d"/><path d="M1042 1165 L1052 1170 L1066 1169 L1068 1158 L1070.6 1146 L1072.6 1144 L1076 1158 L1077 1169 C1084 1172 1094 1172 1102 1167 L1107 1160 L1109.6 1142 L1111.6 1137 L1113.4 1150 L1116 1160 L1120 1163 L1124.3 1179 L1139 1185 L1167.7 1191.6 L1192 1199 L1200 1200 H1042 Z" fill="#0b151d"/><path d="M1268 1200 L1298 1195.8 L1319 1190.5 V1182.6 H1326.5 V1186.3 L1345.6 1183 L1354 1177.8 L1356.6 1170 L1358.3 1162.6 L1360.4 1172.5 L1369 1175 L1381.6 1175.7 L1382 1173 H1390 V1200 Z" fill="#0b151d"/></g><path d="M1251 852 C1252 860 1258 872 1270 883 L1312 887.6 L1282 893 L1313 901 M1302 852 C1312 872 1340 898 1390 907 M1313.5 907.5 C1325 918 1345 931 1390 938 M1265 921.6 C1280 923 1297 916 1313.5 906.5 M1070 947 L1090 935.3 L1122.2 922.6 C1130 925 1140 930 1155 932.7 L1166 933.2" fill="none" stroke="#4f80ff" stroke-width="1.7"/><path d="M1080 917 H1179 M1110.5 897.4 L1120 897 C1122 893 1127 890.4 1132.8 890.4 C1138 890.4 1142 892 1144.4 896 C1150 896 1155 899 1158 903.5 M1187 910 C1190 906 1196 904.5 1203 904 C1204 897 1209 892.5 1216 892.5 C1224 892.5 1229 897 1231.5 902.6 C1236 903 1239.5 904.4 1241.8 905.7 M1168 940 H1218 M1218 931 H1262 M1284 963 H1364 M1284 952 C1285 946 1290 941.8 1297 941.8 L1301 941.4 C1303 937.6 1307 935.3 1311.7 935.3 C1317 935.3 1320.4 938 1322.4 941.7" fill="none" stroke="#4f80ff" stroke-width="1.7"/><path d="M1042 950 L1057.5 948 C1060 946 1064 945.4 1068 946 C1074 947 1078 950 1080.8 954.4 M1093.6 961.8 C1098 962 1101 964 1103 967 M1124.3 978.8 L1074 981.6 C1088 989 1099 1002 1104 1016.6 C1110 1012 1120 1010.4 1128 1010.9 C1145 1012 1158 1021 1166 1031 C1174 1041 1179 1050 1181.7 1057.7 C1190 1056 1196 1057 1201 1058.9 C1212 1063 1219 1072 1221.4 1079 L1225 1090.9 C1232 1088 1241 1086 1250.3 1085 C1258 1077 1268 1072.6 1279 1072.6 C1289 1072.6 1298 1075 1305 1079.4 C1305 1070 1306.5 1064 1308.6 1060 C1312 1053 1316 1050 1320 1048.6 C1326 1044 1331 1042.9 1336 1042.9 C1344 1042.9 1351 1044 1356.6 1046.3 C1356 1038 1357 1031 1358.9 1025.7 C1361 1017 1365 1010 1370.3 1005 C1375 1000 1382 995.5 1390 992.6" fill="none" stroke="#4f80ff" stroke-width="1.7"/><path d="M1042 1006 C1046 999 1052 996.5 1058 996.5 C1062 993.6 1070 993 1076 995.4 C1084 998 1088 1004 1089.4 1010 C1095 1014 1098 1022 1097 1030 M1110 1044.6 C1120 1046 1127.4 1054 1127.4 1063 C1127.4 1070 1123 1074 1120.4 1075.4 C1127 1080 1128.4 1090 1124 1096 M1261 1137 C1260 1128 1267 1121.6 1275.7 1121.6 C1283 1121.6 1288 1125 1290.6 1130 C1294 1128.6 1297 1128.6 1300 1129 C1305 1130 1309 1134 1310 1138.6 M1261 1137 C1262 1148 1265 1158 1276 1164 M1352 1115.4 C1352 1108 1354 1104 1357 1100.5 C1359 1095 1362 1091.6 1366.8 1091 M1379 1095 C1379 1088 1382 1080 1390 1075 M1210 1158 C1216 1152 1224 1150 1232 1150.6" fill="none" stroke="#4f80ff" stroke-width="1.7"/><path d="M1043.1 1050.7 L1044.8 1050.7 L1045.0 1046.2 L1046.1 1041.8 L1047.8 1039.5 L1047.8 1031.7 L1056.7 1031.2 L1059.0 1027.8 L1059.0 1021.1 L1069.0 1021.1 L1069.6 1025.0 L1071.8 1022.2 L1074.0 1021.7 L1074.0 1020.0 L1084.1 1020.0 L1084.1 1023.9 L1086.0 1023.9 L1086.0 1015.8 L1092.4 1015.8 L1092.4 1015.0 L1096.3 1015.0 L1096.3 1020.6 L1099.9 1020.6 L1099.9 1015.0 L1109.7 1015.0 L1109.7 1021.7 L1101.1 1022.2 L1101.1 1025.0 L1103.6 1026.1 L1109.1 1031.2 L1114.2 1033.4 L1115.8 1036.2 L1115.8 1046.8 L1117.5 1047.3 L1122.0 1049.6 L1125.3 1054.0 L1126.1 1060.7 L1127.8 1061.3 L1127.8 1070.7 L1118.6 1071.3 L1119.2 1075.2 L1123.1 1076.9 L1127.5 1081.3 L1128.6 1085.8 L1127.5 1090.3 L1124.2 1094.7 L1122.8 1097.5 L1122.8 1102.5 L1115.8 1104.2 L1108.0 1112.5 L1106.9 1115.3 L1043.1 1115.3 Z" fill="#4f80ff"/><path d="M1037.2 1051.2 L1043.4 1051.2 L1043.4 1060.7 L1037.2 1060.7 Z" fill="#4f80ff"/><path d="M1037.2 1082.2 L1039.2 1082.2 L1039.2 1076.9 L1040.6 1076.0 L1043.4 1076.0 L1043.4 1103.6 L1037.2 1103.6 Z" fill="#4f80ff"/><path d="M1043.1 1110.0 L1135.3 1110.0 L1135.3 1173.0 L1043.1 1173.0 Z" fill="#4f80ff"/><path d="M1037.2 1154.0 L1043.4 1154.0 L1043.4 1164.9 L1037.2 1164.9 Z" fill="#4f80ff"/><path d="M1130.0 1109.0 L1130.0 1106.8 L1136.9 1106.1 L1136.9 1097.0 L1147.4 1097.4 L1149.9 1094.1 L1152.1 1093.4 L1152.1 1090.1 L1161.9 1090.1 L1162.2 1093.8 L1173.1 1095.2 L1173.1 1099.9 L1177.1 1103.2 L1179.6 1108.3 L1180.0 1113.7 L1182.9 1114.1 L1183.3 1117.0 L1189.8 1117.3 L1190.1 1122.8 L1193.8 1127.1 L1195.9 1133.6 L1196.3 1138.0 L1198.8 1138.0 L1199.2 1146.7 L1201.7 1151.7 L1202.8 1159.0 L1203.6 1162.6 L1203.9 1159.0 L1210.1 1159.0 L1213.3 1155.4 L1219.1 1150.7 L1223.5 1149.6 L1229.3 1150.3 L1238.7 1151.4 L1239.4 1154.6 L1246.7 1156.1 L1248.1 1162.6 L1250.3 1163.0 L1250.3 1204.6 L1220.9 1204.6 L1220.9 1201.7 L1207.2 1201.7 L1207.2 1199.9 L1130.0 1199.9 Z" fill="#4f80ff"/><path d="M1064.0 1031.2 L1071.8 1031.2 L1071.8 1036.7 L1072.9 1036.7 L1072.9 1040.9 L1082.1 1040.9 L1082.1 1030.1 L1084.1 1030.1 L1084.1 1040.1 L1089.9 1040.1 L1089.9 1042.9 L1100.2 1042.9 L1100.2 1036.2 L1103.8 1036.2 L1103.8 1051.8 L1108.0 1051.8 L1108.0 1053.5 L1114.2 1053.5 L1114.2 1048.2 L1118.6 1049.6 L1122.5 1054.0 L1123.9 1059.0 L1123.6 1061.3 L1117.5 1061.3 L1117.5 1070.7 L1115.3 1070.7 L1115.3 1069.1 L1104.7 1069.1 L1104.7 1076.3 L1099.7 1080.8 L1097.2 1080.8 L1097.2 1071.3 L1101.9 1065.2 L1101.9 1062.9 L1108.0 1062.9 L1108.0 1053.5 L1101.9 1052.9 L1101.9 1044.0 L1091.9 1044.0 L1091.9 1054.0 L1093.8 1054.0 L1093.8 1056.0 L1088.8 1056.2 L1088.8 1066.3 L1090.7 1066.3 L1090.7 1070.7 L1088.8 1070.7 L1086.8 1071.9 L1086.8 1079.1 L1083.5 1085.8 L1081.3 1072.4 L1084.1 1070.7 L1084.1 1061.8 L1082.1 1061.8 L1082.1 1056.2 L1084.1 1056.2 L1084.1 1045.1 L1072.9 1045.1 L1072.9 1051.8 L1071.8 1053.7 L1061.8 1053.7 L1061.8 1064.3 L1064.0 1064.3 L1064.0 1071.9 L1067.9 1072.4 L1068.4 1084.1 L1071.0 1084.1 L1071.0 1087.5 L1065.1 1088.0 L1062.3 1090.8 L1060.1 1090.8 L1061.2 1085.2 L1061.2 1075.8 L1043.1 1075.8 L1043.1 1061.3 L1047.0 1061.3 L1047.0 1064.3 L1057.3 1064.3 L1057.3 1053.7 L1053.4 1053.7 L1054.0 1042.0 L1055.9 1042.0 L1055.9 1047.1 L1066.2 1047.1 L1066.2 1036.7 L1063.1 1036.7 Z" fill="#9a2f2c"/><path d="M1090.7 1081.3 L1099.7 1080.8 L1099.7 1081.9 L1093.8 1082.2 L1093.8 1089.1 L1088.5 1095.8 L1086.0 1097.5 L1086.0 1095.8 L1088.2 1089.1 Z" fill="#9a2f2c"/><path d="M1104.1 1082.4 L1109.1 1079.1 L1109.1 1081.3 L1119.7 1081.3 L1119.7 1076.9 L1124.2 1079.7 L1126.4 1084.1 L1126.1 1089.7 L1123.6 1093.0 L1120.0 1092.8 L1120.0 1083.3 L1109.7 1083.3 L1109.7 1090.3 L1101.3 1095.8 L1100.2 1093.0 L1104.1 1092.5 Z" fill="#9a2f2c"/><path d="M1084.1 1026.1 L1086.3 1027.0 L1088.5 1029.8 L1084.1 1029.8 Z" fill="#9a2f2c"/><path d="M1096.9 1103.6 L1101.1 1103.6 L1101.1 1100.6 L1102.7 1100.6 L1102.7 1105.6 L1096.9 1105.6 Z" fill="#9a2f2c"/><path d="M1094.1 1031.2 L1101.1 1031.2 L1101.1 1027.3 L1103.6 1027.3 L1108.6 1032.3 L1104.1 1032.8 L1103.6 1034.0 L1099.9 1034.0 L1099.9 1032.8 L1094.1 1032.8 Z" fill="#bb5134"/><path d="M1059.0 1030.9 L1062.0 1030.9 L1062.0 1031.7 L1059.0 1031.7 Z" fill="#bb5134"/><path d="M1047.0 1042.3 L1048.7 1042.3 L1048.7 1050.7 L1047.0 1050.7 Z" fill="#bb5134"/><path d="M1050.3 1042.3 L1051.7 1042.3 L1051.7 1050.7 L1050.3 1050.7 Z" fill="#bb5134"/><path d="M1095.2 1115.3 L1095.2 1110.9 L1097.4 1109.2 L1097.4 1107.5 L1102.7 1107.0 L1103.0 1109.2 L1108.9 1109.2 L1104.7 1113.1 L1103.6 1115.3 Z" fill="#cf6f3d"/><path d="M1113.0 1115.3 L1115.3 1110.9 L1118.6 1109.2 L1126.4 1109.8 L1126.4 1115.3 Z" fill="#cf6f3d"/><path d="M1043.1 1108.1 L1045.0 1108.1 L1045.0 1115.3 L1043.1 1115.3 Z" fill="#cf6f3d"/><path d="M1090.2 1113.9 L1094.9 1113.9 L1094.9 1115.3 L1090.2 1115.3 Z" fill="#cf6f3d"/><path d="M1108.0 1112.5 L1115.3 1104.5 L1116.9 1104.9 L1110.3 1113.1 Z" fill="#e8bc90"/><path d="M1043.1 1110.0 L1045.0 1110.0 L1045.0 1113.9 L1048.9 1113.9 L1048.9 1118.1 L1051.2 1118.1 L1051.2 1120.0 L1054.0 1120.0 L1054.0 1123.9 L1055.9 1123.9 L1055.9 1132.9 L1057.9 1132.9 L1057.9 1134.0 L1051.2 1134.0 L1051.2 1144.0 L1055.1 1144.0 L1055.1 1156.3 L1055.6 1156.3 L1055.6 1156.8 L1054.0 1156.8 L1054.0 1154.9 L1048.9 1154.9 L1048.9 1146.2 L1048.1 1142.1 L1046.1 1142.1 L1046.1 1154.0 L1043.1 1154.0 Z" fill="#cf6f3d"/><path d="M1096.9 1110.0 L1108.0 1110.0 L1104.7 1113.9 L1095.2 1113.9 L1095.2 1118.9 L1089.1 1118.9 L1089.1 1129.0 L1098.0 1129.0 L1098.0 1132.9 L1094.1 1132.9 L1094.1 1139.8 L1091.0 1140.1 L1091.0 1144.8 L1088.0 1144.8 L1088.0 1135.9 L1079.0 1135.9 L1079.0 1134.0 L1075.1 1134.0 L1075.1 1129.0 L1076.8 1122.8 L1077.9 1120.3 L1082.9 1120.0 L1082.9 1115.0 L1090.2 1115.0 L1090.2 1113.9 L1095.2 1113.9 L1095.2 1111.1 Z" fill="#cf6f3d"/><path d="M1113.0 1113.9 L1115.8 1110.0 L1127.0 1110.0 L1126.1 1111.1 L1126.1 1118.9 L1121.1 1118.9 L1121.1 1129.0 L1118.1 1129.0 L1118.1 1129.8 L1113.0 1129.8 L1114.2 1129.0 L1114.2 1123.9 L1115.3 1123.4 L1115.3 1113.9 Z" fill="#cf6f3d"/><path d="M1076.2 1144.0 L1077.9 1144.0 L1077.9 1146.0 L1081.8 1146.0 L1081.8 1148.7 L1079.0 1149.0 L1079.0 1154.9 L1077.9 1154.9 L1077.4 1151.2 L1076.2 1147.9 Z" fill="#cf6f3d"/><path d="M1129.2 1146.0 L1133.1 1146.0 L1133.1 1149.9 L1135.3 1149.9 L1135.3 1152.9 L1132.3 1152.9 L1132.0 1147.1 L1129.2 1147.1 Z" fill="#cf6f3d"/><path d="M1084.9 1146.0 L1087.1 1146.0 L1087.1 1147.1 L1086.0 1147.1 L1086.0 1149.0 L1084.9 1149.0 Z" fill="#cf6f3d"/><path d="M1064.0 1118.9 L1065.9 1118.9 L1065.9 1123.1 L1064.0 1123.1 Z" fill="#cf6f3d"/><path d="M1065.9 1124.8 L1067.1 1124.8 L1067.1 1126.2 L1065.9 1126.2 Z" fill="#cf6f3d"/><path d="M1099.1 1127.8 L1102.2 1127.8 L1102.2 1129.2 L1099.1 1129.2 Z" fill="#cf6f3d"/><path d="M1059.0 1144.0 L1060.1 1144.0 L1060.1 1145.1 L1059.0 1145.1 Z" fill="#cf6f3d"/><path d="M1059.8 1155.2 L1062.9 1155.2 L1062.9 1157.4 L1059.8 1157.4 Z" fill="#cf6f3d"/><path d="M1125.9 1140.1 L1128.1 1140.1 L1128.1 1142.9 L1125.9 1142.9 Z" fill="#cf6f3d"/><path d="M1133.9 1174.9 L1135.3 1174.9 L1135.3 1176.9 L1133.9 1176.9 Z" fill="#cf6f3d"/><path d="M1131.0 1130.1 L1132.0 1130.1 L1132.0 1134.8 L1131.0 1134.8 Z" fill="#9a2f2c"/><path d="M1108.0 1113.3 L1111.4 1110.0 L1113.0 1110.0 L1110.3 1113.9 Z" fill="#f3c98f"/><path d="M1043.1 1165.2 L1051.7 1165.2 L1051.7 1166.9 L1054.0 1168.2 L1057.9 1169.1 L1068.2 1169.1 L1068.2 1158.5 L1064.3 1158.5 L1065.1 1155.2 L1069.0 1155.2 L1069.0 1146.2 L1070.1 1144.0 L1073.7 1144.0 L1073.7 1148.5 L1077.4 1157.7 L1076.0 1157.9 L1076.0 1171.9 L1095.2 1171.9 L1095.2 1170.2 L1100.2 1169.4 L1103.3 1167.1 L1106.1 1166.9 L1106.1 1158.2 L1111.1 1158.2 L1111.1 1149.3 L1111.9 1149.0 L1111.9 1140.1 L1113.0 1140.1 L1113.0 1149.0 L1118.9 1149.0 L1118.9 1149.9 L1115.8 1149.9 L1115.8 1159.9 L1120.0 1160.2 L1120.0 1161.8 L1118.9 1162.1 L1118.9 1171.9 L1122.0 1172.4 L1123.9 1173.3 L1123.9 1181.1 L1133.9 1181.1 L1134.2 1179.1 L1135.3 1179.1 L1135.3 1198.6 L1047.3 1198.6 L1047.3 1194.7 L1043.1 1194.7 Z" fill="#0b151d"/><path d="M1108.0 1135.1 L1111.9 1135.1 L1111.9 1139.0 L1108.0 1139.0 Z" fill="#0b151d"/><path d="M1069.0 1124.9 L1074.0 1124.9 L1074.0 1127.8 L1072.9 1127.8 L1072.9 1126.2 L1069.0 1126.2 Z" fill="#0b151d"/><path d="M1160.1 1100.3 L1162.2 1095.9 L1163.0 1095.9 L1163.0 1105.0 L1173.1 1105.0 L1173.1 1102.1 L1176.4 1104.6 L1177.8 1109.0 L1177.8 1113.7 L1164.1 1113.7 L1164.1 1121.7 L1161.9 1122.0 L1161.5 1130.7 L1159.3 1135.1 L1157.9 1134.7 L1157.2 1124.9 L1156.1 1119.5 L1159.0 1119.1 L1159.0 1109.0 L1148.1 1109.0 L1148.1 1108.3 L1156.1 1107.9 L1156.1 1104.3 L1160.1 1104.3 Z" fill="#9a2f2c"/><path d="M1143.8 1110.4 L1147.8 1110.4 L1147.8 1119.1 L1151.7 1119.1 L1151.7 1120.6 L1143.8 1120.9 L1143.8 1126.7 L1139.4 1126.7 L1138.3 1121.3 L1140.5 1119.1 L1143.4 1117.0 Z" fill="#9a2f2c"/><path d="M1172.4 1124.2 L1180.0 1124.2 L1180.0 1126.7 L1176.0 1127.1 L1176.0 1135.4 L1171.3 1139.8 L1164.1 1140.5 L1163.0 1137.2 L1165.5 1132.9 L1172.0 1131.8 Z" fill="#9a2f2c"/><path d="M1145.2 1131.1 L1147.8 1131.1 L1147.8 1140.9 L1145.2 1140.9 Z" fill="#9a2f2c"/><path d="M1151.4 1131.1 L1153.2 1131.1 L1152.5 1138.0 L1151.4 1135.1 Z" fill="#9a2f2c"/><path d="M1177.1 1139.1 L1180.0 1137.2 L1179.6 1140.1 L1177.5 1142.0 Z" fill="#9a2f2c"/><path d="M1178.2 1145.9 L1182.9 1145.9 L1182.9 1153.9 L1178.2 1153.9 Z" fill="#9a2f2c"/><path d="M1223.5 1162.2 L1225.7 1159.7 L1226.4 1163.3 L1224.2 1165.9 L1223.1 1165.5 Z" fill="#9a2f2c"/><path d="M1227.1 1165.1 L1229.6 1163.3 L1236.9 1163.3 L1236.9 1166.2 L1238.7 1166.6 L1237.2 1172.8 L1235.1 1172.8 L1234.3 1167.0 L1232.9 1166.6 L1232.2 1172.0 L1227.1 1173.5 Z" fill="#9a2f2c"/><path d="M1240.1 1175.7 L1243.8 1173.5 L1246.7 1174.2 L1246.3 1176.4 L1250.3 1176.4 L1250.3 1181.4 L1247.4 1182.2 L1245.9 1177.8 L1243.0 1177.1 L1241.6 1178.6 Z" fill="#9a2f2c"/><path d="M1131.1 1130.0 L1132.0 1130.0 L1132.0 1134.7 L1131.1 1134.7 Z" fill="#9a2f2c"/><path d="M1197.0 1158.1 L1199.9 1158.1 L1199.9 1159.7 L1197.0 1159.7 Z" fill="#9a2f2c"/><path d="M1187.2 1127.1 L1191.2 1127.1 L1193.8 1133.6 L1193.8 1137.6 L1190.5 1137.6 L1190.1 1131.8 L1187.2 1131.8 Z" fill="#cf6f3d"/><path d="M1130.0 1145.9 L1132.9 1145.9 L1132.9 1150.3 L1139.4 1150.3 L1139.4 1151.7 L1137.8 1152.1 L1137.8 1158.6 L1135.1 1158.6 L1135.1 1152.8 L1132.2 1152.8 L1132.2 1148.1 L1130.0 1147.0 Z" fill="#cf6f3d"/><path d="M1152.1 1160.1 L1153.9 1160.1 L1153.9 1166.6 L1152.1 1166.6 Z" fill="#cf6f3d"/><path d="M1165.1 1157.2 L1168.0 1157.2 L1168.4 1163.3 L1169.5 1174.2 L1169.9 1182.5 L1168.4 1182.5 L1168.0 1180.0 L1163.3 1179.6 L1161.2 1168.4 L1161.2 1163.3 L1165.1 1163.0 Z" fill="#cf6f3d"/><path d="M1173.1 1164.1 L1178.9 1164.1 L1178.9 1171.7 L1173.1 1171.7 Z" fill="#cf6f3d"/><path d="M1182.2 1172.0 L1184.0 1172.0 L1183.3 1177.8 L1182.2 1177.8 Z" fill="#cf6f3d"/><path d="M1134.0 1175.3 L1139.1 1175.3 L1139.1 1178.2 L1134.0 1176.4 Z" fill="#cf6f3d"/><path d="M1142.0 1173.1 L1143.2 1173.1 L1143.2 1174.8 L1142.0 1174.8 Z" fill="#cf6f3d"/><path d="M1213.3 1157.9 L1219.5 1152.5 L1226.0 1151.7 L1226.0 1156.8 L1222.8 1159.7 L1220.6 1165.9 L1217.0 1166.2 L1217.0 1176.0 L1223.8 1176.4 L1223.8 1182.5 L1222.0 1182.9 L1222.0 1193.0 L1224.2 1193.0 L1224.2 1194.5 L1220.9 1194.9 L1220.9 1196.7 L1219.1 1196.7 L1218.4 1182.9 L1207.9 1182.9 L1207.9 1189.4 L1206.1 1189.4 L1206.1 1183.6 L1202.5 1183.6 L1202.5 1173.5 L1197.4 1173.5 L1197.4 1170.6 L1202.8 1169.5 L1202.8 1165.5 L1203.9 1165.5 L1203.9 1168.8 L1214.1 1168.8 Z" fill="#cf6f3d"/><path d="M1193.0 1184.3 L1195.9 1184.3 L1195.9 1186.9 L1193.0 1186.9 Z" fill="#cf6f3d"/><path d="M1199.2 1184.3 L1203.2 1184.3 L1203.2 1186.9 L1199.2 1186.9 Z" fill="#cf6f3d"/><path d="M1227.8 1193.0 L1232.2 1192.7 L1232.5 1191.2 L1234.3 1191.2 L1235.1 1194.9 L1227.8 1194.9 Z" fill="#cf6f3d"/><path d="M1130.0 1181.1 L1134.3 1179.3 L1138.7 1180.7 L1139.1 1185.1 L1145.6 1186.5 L1145.9 1188.3 L1157.5 1189.8 L1167.0 1190.5 L1167.3 1193.0 L1177.8 1194.5 L1185.8 1195.2 L1186.2 1197.8 L1192.0 1198.1 L1192.0 1199.0 L1130.0 1199.0 Z" fill="#0b151d"/><path d="M1157.0 1163.2 L1159.0 1163.2 L1159.0 1166.8 L1157.0 1166.8 Z" fill="#0b151d"/><path d="M1159.0 1177.1 L1161.2 1177.1 L1161.2 1180.0 L1159.0 1180.0 Z" fill="#0b151d"/><path d="M1144.9 1173.1 L1147.0 1173.1 L1147.0 1174.8 L1144.9 1174.8 Z" fill="#0b151d"/><path d="M1141.2 1149.9 L1143.0 1149.9 L1143.0 1151.0 L1141.2 1151.0 Z" fill="#0b151d"/><path d="M1236.5 1191.6 L1238.0 1191.6 L1238.0 1194.9 L1236.5 1194.9 Z" fill="#0b151d"/><rect x="1210.0" y="1151.4" width="28.6" height="48.7" fill="#4f80ff"/><rect x="1210.0" y="1157.7" width="47.7" height="42.4" fill="#4f80ff"/><rect x="1220.6" y="1193.7" width="53.0" height="11.1" fill="#4f80ff"/><rect x="1256.6" y="1172.5" width="133.5" height="27.5" fill="#4f80ff"/><rect x="1275.7" y="1161.9" width="82.6" height="23.3" fill="#4f80ff"/><rect x="1283.1" y="1146.1" width="20.1" height="22.2" fill="#4f80ff"/><rect x="1308.5" y="1156.7" width="81.6" height="20.1" fill="#4f80ff"/><rect x="1315.9" y="1136.5" width="14.8" height="21.2" fill="#4f80ff"/><rect x="1326.5" y="1127.0" width="13.8" height="19.1" fill="#4f80ff"/><rect x="1339.2" y="1117.5" width="12.7" height="9.5" fill="#4f80ff"/><rect x="1351.9" y="1115.3" width="10.6" height="9.5" fill="#4f80ff"/><rect x="1351.9" y="1137.6" width="10.6" height="20.1" fill="#4f80ff"/><rect x="1362.5" y="1127.0" width="10.6" height="30.7" fill="#4f80ff"/><rect x="1373.1" y="1087.8" width="16.9" height="69.9" fill="#4f80ff"/><rect x="1371.0" y="1097.3" width="23.8" height="7.4" fill="#4f80ff"/><rect x="1383.7" y="1070.3" width="11.1" height="12.2" fill="#4f80ff"/><rect x="1384.8" y="1121.7" width="10.1" height="9.5" fill="#4f80ff"/><rect x="1383.7" y="1136.5" width="11.1" height="19.1" fill="#4f80ff"/><rect x="1342.4" y="1146.1" width="9.5" height="11.7" fill="#4f80ff"/><rect x="1213.2" y="1152.4" width="12.7" height="8.5" fill="#cf6f3d"/><rect x="1210.0" y="1166.2" width="7.4" height="9.5" fill="#cf6f3d"/><rect x="1217.4" y="1175.7" width="6.4" height="18.0" fill="#cf6f3d"/><rect x="1250.3" y="1175.7" width="12.7" height="12.7" fill="#cf6f3d"/><rect x="1281.0" y="1172.5" width="8.5" height="3.2" fill="#cf6f3d"/><rect x="1292.1" y="1181.0" width="2.1" height="3.7" fill="#cf6f3d"/><rect x="1303.8" y="1181.0" width="3.2" height="2.1" fill="#cf6f3d"/><rect x="1226.9" y="1163.0" width="11.7" height="9.5" fill="#9a2f2c"/><rect x="1240.7" y="1173.1" width="8.5" height="6.9" fill="#9a2f2c"/><rect x="1299.0" y="1164.1" width="3.2" height="3.7" fill="#9a2f2c"/><rect x="1227.5" y="1192.7" width="7.4" height="2.1" fill="#cf6f3d"/><rect x="1250.3" y="1193.7" width="3.7" height="1.3" fill="#cf6f3d"/><rect x="1303.2" y="1148.2" width="5.8" height="22.2" fill="#cf6f3d"/><rect x="1332.9" y="1156.7" width="5.3" height="6.4" fill="#cf6f3d"/><rect x="1377.4" y="1163.0" width="2.6" height="2.6" fill="#cf6f3d"/><rect x="1379.5" y="1130.2" width="4.2" height="11.7" fill="#cf6f3d"/><rect x="1362.5" y="1138.6" width="3.2" height="10.1" fill="#cf6f3d"/><rect x="1379.5" y="1109.0" width="5.3" height="8.5" fill="#cf6f3d"/><path d="M1268 1200 L1298 1195.8 L1319 1190.5 V1182.6 H1326.5 V1186.3 L1345.6 1183 L1354 1177.8 L1356.6 1170 L1358.3 1162.6 L1360.4 1172.5 L1369 1175 L1381.6 1175.7 L1382 1173 H1389 V1200 Z" fill="#0b151d"/><rect x="1042" y="852" width="348" height="347.6" fill="none" stroke="#4f80ff" stroke-width="1.7" stroke-width="2"/><rect x="1036.9" y="846.9" width="10" height="10" fill="#4f80ff"/><rect x="1079.0" y="911.8" width="10" height="10" fill="#4f80ff"/><rect x="1087.5" y="908.1" width="10" height="10" fill="#4f80ff"/><rect x="1093.9" y="904.4" width="10" height="10" fill="#4f80ff"/><rect x="1099.7" y="899.6" width="10" height="10" fill="#4f80ff"/><rect x="1116.1" y="894.9" width="10" height="10" fill="#4f80ff"/><rect x="1141.0" y="897.0" width="10" height="10" fill="#4f80ff"/><rect x="1147.9" y="899.1" width="10" height="10" fill="#4f80ff"/><rect x="1117.2" y="912.9" width="10" height="10" fill="#4f80ff"/><rect x="1161.7" y="908.1" width="10" height="10" fill="#4f80ff"/><rect x="1168.0" y="910.7" width="10" height="10" fill="#4f80ff"/><rect x="1178.6" y="911.3" width="10" height="10" fill="#4f80ff"/><rect x="1177.5" y="918.7" width="10" height="10" fill="#4f80ff"/><rect x="1177.0" y="927.2" width="10" height="10" fill="#4f80ff"/><rect x="1162.7" y="927.2" width="10" height="10" fill="#4f80ff"/><rect x="1169.1" y="924.0" width="10" height="10" fill="#4f80ff"/><rect x="1157.9" y="935.6" width="10" height="10" fill="#4f80ff"/><rect x="1195.0" y="899.6" width="10" height="10" fill="#4f80ff"/><rect x="1207.2" y="926.1" width="10" height="10" fill="#4f80ff"/><rect x="1213.6" y="928.2" width="10" height="10" fill="#4f80ff"/><rect x="1223.1" y="902.8" width="10" height="10" fill="#4f80ff"/><rect x="1223.1" y="935.6" width="10" height="10" fill="#4f80ff"/><rect x="1080.1" y="934.0" width="10" height="10" fill="#4f80ff"/><rect x="1065.0" y="940.4" width="10" height="10" fill="#4f80ff"/><rect x="1036.9" y="950.5" width="10" height="10" fill="#4f80ff"/><rect x="1047.8" y="949.9" width="10" height="10" fill="#4f80ff"/><rect x="1078.0" y="954.7" width="10" height="10" fill="#4f80ff"/><rect x="1087.0" y="958.9" width="10" height="10" fill="#4f80ff"/><rect x="1100.2" y="968.5" width="10" height="10" fill="#4f80ff"/><rect x="1107.6" y="971.7" width="10" height="10" fill="#4f80ff"/><rect x="1115.0" y="973.8" width="10" height="10" fill="#4f80ff"/><rect x="1062.9" y="974.8" width="10" height="10" fill="#4f80ff"/><rect x="1036.9" y="995.0" width="10" height="10" fill="#4f80ff"/><rect x="1053.1" y="995.0" width="10" height="10" fill="#4f80ff"/><rect x="1074.8" y="1000.3" width="10" height="10" fill="#4f80ff"/><rect x="1099.7" y="1011.9" width="10" height="10" fill="#4f80ff"/><rect x="1085.9" y="1016.1" width="10" height="10" fill="#4f80ff"/><rect x="1058.9" y="1020.4" width="10" height="10" fill="#4f80ff"/><rect x="1071.6" y="1019.9" width="10" height="10" fill="#4f80ff"/><rect x="1246.0" y="846.9" width="10" height="10" fill="#4f80ff"/><rect x="1296.9" y="846.9" width="10" height="10" fill="#4f80ff"/><rect x="1384.8" y="846.9" width="10" height="10" fill="#4f80ff"/><rect x="1264.9" y="877.9" width="10" height="10" fill="#4f80ff"/><rect x="1307.8" y="883.9" width="10" height="10" fill="#4f80ff"/><rect x="1277.0" y="888.0" width="10" height="10" fill="#4f80ff"/><rect x="1307.4" y="895.2" width="10" height="10" fill="#4f80ff"/><rect x="1308.3" y="900.9" width="10" height="10" fill="#4f80ff"/><rect x="1384.8" y="901.7" width="10" height="10" fill="#4f80ff"/><rect x="1384.8" y="933.0" width="10" height="10" fill="#4f80ff"/><rect x="1384.8" y="987.0" width="10" height="10" fill="#4f80ff"/><rect x="1225.9" y="902.8" width="10" height="10" fill="#4f80ff"/><rect x="1243.1" y="909.7" width="10" height="10" fill="#4f80ff"/><rect x="1251.6" y="914.4" width="10" height="10" fill="#4f80ff"/><rect x="1255.8" y="919.7" width="10" height="10" fill="#4f80ff"/><rect x="1255.8" y="925.0" width="10" height="10" fill="#4f80ff"/><rect x="1210.8" y="925.0" width="10" height="10" fill="#4f80ff"/><rect x="1217.7" y="930.3" width="10" height="10" fill="#4f80ff"/><rect x="1225.1" y="935.6" width="10" height="10" fill="#4f80ff"/><rect x="1306.7" y="931.9" width="10" height="10" fill="#4f80ff"/><rect x="1298.0" y="938.8" width="10" height="10" fill="#4f80ff"/><rect x="1322.1" y="943.6" width="10" height="10" fill="#4f80ff"/><rect x="1327.9" y="947.1" width="10" height="10" fill="#4f80ff"/><rect x="1337.9" y="952.1" width="10" height="10" fill="#4f80ff"/><rect x="1346.9" y="957.9" width="10" height="10" fill="#4f80ff"/><rect x="1355.2" y="954.9" width="10" height="10" fill="#4f80ff"/><rect x="1280.7" y="952.1" width="10" height="10" fill="#4f80ff"/><rect x="1276.0" y="957.9" width="10" height="10" fill="#4f80ff"/><rect x="1237.1" y="971.7" width="10" height="10" fill="#4f80ff"/><rect x="1352.2" y="1042.0" width="10" height="10" fill="#4f80ff"/><rect x="1299.8" y="1074.9" width="10" height="10" fill="#4f80ff"/><rect x="1245.0" y="1080.9" width="10" height="10" fill="#4f80ff"/><rect x="1220.0" y="1087.0" width="10" height="10" fill="#4f80ff"/><rect x="1384.8" y="1070.1" width="10" height="10" fill="#4f80ff"/><rect x="1351.2" y="1099.2" width="10" height="10" fill="#4f80ff"/><rect x="1384.8" y="1095.0" width="10" height="10" fill="#4f80ff"/><rect x="1256.9" y="1125.7" width="10" height="10" fill="#4f80ff"/><rect x="1285.0" y="1127.8" width="10" height="10" fill="#4f80ff"/><rect x="1305.8" y="1137.9" width="10" height="10" fill="#4f80ff"/><rect x="1384.8" y="1195.1" width="10" height="10" fill="#4f80ff"/><rect x="1384.8" y="1120.9" width="10" height="10" fill="#4f80ff"/><rect x="1384.8" y="1135.8" width="10" height="10" fill="#4f80ff"/><rect x="1176.0" y="1054.0" width="10" height="10" fill="#4f80ff"/><rect x="1219.9" y="1087.0" width="10" height="10" fill="#4f80ff"/><rect x="1036.9" y="1195.1" width="10" height="10" fill="#4f80ff"/></svg>
<div class="a" style="left:1740px;top:980px;width:134px;height:134px;background:#000;border-radius:0px;overflow:hidden"><svg class="a" style="left:2px;top:2px" width="130" height="130" viewBox="85 85 1615 1615" preserveAspectRatio="none"><defs><linearGradient id="t1s" x1="0" y1="85" x2="0" y2="1250" gradientUnits="userSpaceOnUse"><stop offset="0" stop-color="#20465a"/><stop offset="0.12" stop-color="#264e60"/><stop offset="0.3" stop-color="#3d6772"/><stop offset="0.5" stop-color="#5f8789"/><stop offset="0.68" stop-color="#80a39f"/><stop offset="0.85" stop-color="#93b3aa"/><stop offset="1" stop-color="#93b3aa"/></linearGradient></defs><rect x="85" y="85" width="1615" height="1615" fill="url(#t1s)"/><path d="M1210 85 L1175 150 L1165 200 L1055 240 L1045 300 L895 330 L845 400 L835 490 L735 500 L675 560 L665 600 L575 625 L535 700 L555 780 L455 830 L355 860 L325 900 L325 930 L680 930 L765 925 L700 885 L640 860 L780 840 L930 815 L990 770 L1020 690 L1070 655 L1700 655 L1700 85 Z" fill="#efd39d" stroke="#efd39d" stroke-width="26" stroke-linejoin="round"/><path d="M1700 85 L1570 110 L1510 160 L1410 170 L1352 230 L1342 340 L1292 388 L1240 480 L940 502 L890 530 L860 588 L810 610 L775 640 L1070 645 L1105 680 L1555 680 L1560 660 L1700 655 Z" fill="#b89a88" stroke="#b89a88" stroke-width="18" stroke-linejoin="round"/><path d="M1100 690 L1160 640 L1240 630 L1330 600 L1400 610 L1500 600 L1580 570 L1700 600 L1700 665 L1560 670 L1560 690 L1100 690 Z" fill="#a99984" /><path d="M755 298 L795 262 L832 252 L852 232 L885 240 L898 268 L860 282 L858 298 Z" fill="#efd39d" stroke="#efd39d" stroke-width="12" stroke-linejoin="round"/><path d="M785 985 L835 960 L1000 912 L1062 875 L1120 862 L1168 885 L1200 893 L1250 877 L1296 886 L1335 922 L1385 955 L1190 958 L1208 985 Z" fill="#efd39d" stroke="#efd39d" stroke-width="14" stroke-linejoin="round"/><path d="M1700 915 L1645 948 L1565 955 L1488 990 L1412 1046 L1392 1138 L1268 1150 L1200 1188 L1190 1300 L1700 1300 Z" fill="#efd39d" stroke="#efd39d" stroke-width="18" stroke-linejoin="round"/><path d="M390 1300 L410 1262 L458 1206 L545 1178 L606 1108 L684 1075 L778 1075 L850 1108 L920 1090 L988 1108 L1058 1138 L1128 1150 L1195 1300 Z" fill="#efd39d" stroke="#efd39d" stroke-width="18" stroke-linejoin="round"/><path d="M356 1160 L357 1134 L402 1108 L448 1116 L468 1142 L466 1160 Z" fill="#efd39d" stroke="#efd39d" stroke-width="12" stroke-linejoin="round"/><path d="M85 755 L110 790 L150 770 L180 830 L245 830 L235 940 L210 1000 L260 1010 L320 1010 L330 1050 L320 1100 L350 1120 L360 1190 L400 1210 L370 1300 L85 1300 Z" fill="#f0a334" /><path d="M85 1300 L290 1290 L480 1290 L600 1380 L1200 1300 L1350 1300 L1420 1190 L1520 1140 L1600 1180 L1700 1150 L1700 1700 L85 1700 Z" fill="#e98b3a" /><path d="M530 1290 L600 1220 L660 1240 L690 1190 L760 1140 L850 1150 L930 1200 L980 1270 L980 1400 L900 1500 L700 1520 L600 1400 Z" fill="#d8693a" /><path d="M950 1210 L1020 1140 L1120 1150 L1190 1230 L1230 1290 L1200 1370 L1130 1400 L1140 1500 L1180 1560 L1120 1570 L1100 1420 L1000 1400 L970 1320 Z" fill="#a8453a" /><path d="M820 1470 L900 1400 L1000 1400 L1100 1440 L1130 1550 L1000 1620 L850 1600 Z" fill="#ed9a3b" /><path d="M1350 1700 L1420 1560 L1560 1500 L1700 1400 L1700 1700 Z" fill="#d9693a" /><path d="M480 1560 L620 1440 L740 1500 L800 1600 L600 1700 L480 1700 Z" fill="#a94a38" /><path d="M1000 1700 L1100 1600 L1250 1640 L1300 1700 Z" fill="#a94a38" /><path d="M620 1700 L760 1590 L1000 1560 L1200 1700 Z" fill="#d8693a" /><path d="M85 1290 L150 1260 L250 1280 L330 1340 L340 1400 L300 1440 L400 1480 L380 1560 L440 1600 L470 1700 L85 1700 Z" fill="#4a1d24" /><path d="M490 1640 L560 1590 L640 1580 L600 1640 L580 1680 L490 1680 Z" fill="#4a1d24" /><path d="M150 1700 L160 1350 M150 1600 L100 1480 M160 1500 L240 1300 M160 1560 L330 1200 M100 1230 L180 1130 M200 1250 L245 1150 M470 1700 L470 1560 L410 1420 M470 1580 L540 1480 M770 1560 L800 1400 L740 1260 M800 1420 L900 1320 M790 1440 L620 1340 M1050 1350 L1040 1230 M1050 1350 L1130 1200 M1050 1380 L1170 1300 M960 1700 L980 1560 M1540 1700 L1530 1520 L1480 1300 M1530 1540 L1400 1420 M1530 1560 L1640 1400 M1545 1640 L1700 1520 M1440 1640 L1300 1460" stroke="#1d1620" stroke-width="17" fill="none"/></svg></div><div class="a" style="left:1740px;top:980px;width:134px;height:134px;border:2px solid #000;border-radius:0px"></div>
<div class="a" style="left:1882px;top:980px;width:134px;height:134px;background:#000;border-radius:0px;overflow:hidden"><svg class="a" style="left:2px;top:2px" width="130" height="130" viewBox="85 85 1615 1615" preserveAspectRatio="none"><rect x="85" y="85" width="1615" height="1615" fill="#45869a"/><path d="M85 570 L140 570 L180 530 L240 505 L760 470 L775 390 L830 330 L900 318 L965 355 L985 405 L1055 408 L1105 455 L1160 476 L1218 448 L1275 486 L1335 488 L1385 526 L1390 1000 L85 1000 Z" fill="#7cacb0" stroke="#7cacb0" stroke-width="16" stroke-linejoin="round"/><path d="M185 655 L222 625 L222 575 L265 505 L305 478 L325 438 L380 418 L436 446 L456 495 L512 495 L524 436 L572 388 L640 378 L696 406 L726 454 L738 486 L788 482 L818 516 L812 534 L760 540 L680 575 L650 598 L560 596 L500 635 L450 692 L350 692 L290 674 L230 664 Z" fill="#e6dcbe" stroke="#e6dcbe" stroke-width="14" stroke-linejoin="round"/><path d="M998 735 L1025 708 L1072 694 L1102 656 L1150 646 L1186 664 L1208 700 L1160 726 L1130 758 L1025 758 Z" fill="#e6dcbe" stroke="#e6dcbe" stroke-width="12" stroke-linejoin="round"/><path d="M85 580 L120 582 L165 635 L176 688 L240 680 L318 708 L374 765 L390 838 L458 848 L500 878 L524 838 L580 814 L638 818 L684 856 L698 902 L694 950 L716 980 L760 968 L760 1100 L700 1150 L600 1200 L520 1500 L85 1500 Z" fill="#b36c64" stroke="#b36c64" stroke-width="14" stroke-linejoin="round"/><path d="M1700 235 L1602 244 L1526 296 L1488 362 L1498 432 L1506 466 L1436 508 L1388 564 L1370 620 L1386 688 L1272 698 L1186 738 L1138 804 L1148 876 L1204 896 L1262 990 L1300 1050 L1280 1120 L1180 1160 L1180 1250 L1700 1250 Z" fill="#c0906e" stroke="#c0906e" stroke-width="14" stroke-linejoin="round"/><path d="M1180 1150 L1300 1130 L1400 1100 L1560 1060 L1700 1040 L1700 1500 L1000 1500 L1040 1350 Z" fill="#b98070" /><path d="M750 1030 L768 968 L826 938 L846 880 L902 850 L960 868 L1010 850 L1076 860 L1106 908 L1166 890 L1204 928 L1234 994 L1282 1034 L1290 1078 L1254 1114 L1176 1152 L1166 1226 L1098 1254 L1040 1330 L992 1238 L904 1176 L856 1108 L768 1096 Z" fill="#e87e42" stroke="#e87e42" stroke-width="16" stroke-linejoin="round"/><path d="M1320 1280 L1338 1186 L1404 1128 L1482 1090 L1580 1070 L1676 1080 L1700 1104 L1700 1380 L1640 1436 L1590 1462 L1522 1434 L1444 1394 L1366 1346 Z" fill="#b9392f" stroke="#b9392f" stroke-width="14" stroke-linejoin="round"/><path d="M480 1330 L526 1296 L566 1208 L644 1168 L702 1120 L826 1120 L856 1166 L926 1206 L994 1264 L1022 1330 L1022 1398 L956 1474 L860 1560 L752 1524 L604 1474 L508 1416 Z" fill="#ebaa48" stroke="#ebaa48" stroke-width="16" stroke-linejoin="round"/><path d="M85 1200 L130 1238 L180 1238 L230 1306 L300 1298 L350 1346 L420 1396 L470 1456 L510 1524 L560 1488 L700 1516 L860 1576 L960 1496 L1080 1446 L1100 1408 L1180 1388 L1240 1398 L1290 1358 L1340 1368 L1380 1406 L1440 1426 L1530 1466 L1600 1476 L1700 1380 L1700 1700 L85 1700 Z" fill="#421d23" stroke="#421d23" stroke-width="10" stroke-linejoin="round"/><path d="M860 1570 L1010 1330 L1060 1260 L1100 1080 L1120 990 M1060 1260 L1150 1000 M1030 1200 L930 980 M1010 1130 L840 1030 M1040 1320 L1250 1190 L1260 1150 M1060 1360 L1280 1280 M860 1560 L790 1180 M860 1540 L870 1230 M850 1540 L620 1310 M850 1550 L540 1360 M860 1500 L960 1330 M840 1500 L700 1260 M1540 1460 L1520 1200 M1540 1440 L1450 1150 M1550 1440 L1620 1130 M1530 1450 L1390 1230 M1540 1460 L1340 1310 M1560 1440 L1640 1280" stroke="#231a22" stroke-width="13" fill="none"/></svg></div><div class="a" style="left:1882px;top:980px;width:134px;height:134px;border:2px solid #000;border-radius:0px"></div>
<div class="a" style="left:2024px;top:980px;width:134px;height:134px;background:#000"></div><div class="a" style="left:2024px;top:980px;width:134px;height:134px;background:#0b151d;border-radius:5px;overflow:hidden"><svg class="a" style="left:2px;top:2px" width="130" height="130" viewBox="1042 852 348 348" preserveAspectRatio="none"><defs><linearGradient id="tsky" x1="0" y1="905" x2="0" y2="1095" gradientUnits="userSpaceOnUse"><stop offset="0" stop-color="#357c89"/><stop offset="0.45" stop-color="#4f939d"/><stop offset="1" stop-color="#87b4b9"/></linearGradient><clipPath id="tclip"><rect x="1042" y="852" width="348" height="348"/></clipPath></defs><g clip-path="url(#tclip)"><rect x="1042" y="852" width="348" height="348" fill="#3d3f44"/><path d="M1042 962 L1070 947 L1090 935.3 L1122.2 922.6 C1130 925 1140 930 1155 932.7 L1166 933.2 L1190 930 L1263 931 L1265 921.6 C1280 923 1297 916 1313.5 906.5 C1325 918 1345 931 1390 938 V1110 H1042 Z" fill="url(#tsky)"/><path d="M1251 852 C1252 860 1258 872 1270 883 L1312 887.6 L1282 893 L1313 901 L1313.5 907.5 C1325 918 1345 931 1390 938 V852 Z" fill="#e8bc90"/><path d="M1302 852 C1312 872 1340 898 1390 907 V852 Z" fill="#935d5a"/><path d="M1080 917 L1079 913.5 L1089 910 L1100 903.6 L1110.5 897.4 L1120 897 C1122 893 1127 890.4 1132.8 890.4 C1138 890.4 1142 892 1144.4 896 C1150 896 1155 899 1158 903.5 L1166 908 L1176 913 L1179 917 Z" fill="#e8bc90"/><path d="M1168 940 L1175 935 L1187 935 L1187 910 C1190 906 1196 904.5 1203 904 C1204 897 1209 892.5 1216 892.5 C1224 892.5 1229 897 1231.5 902.6 C1236 903 1239.5 904.4 1241.8 905.7 L1247 912 L1258 921 L1262.5 931 L1218 931 L1218 940 Z" fill="#e8bc90"/><path d="M1284 963 L1284 952 C1285 946 1290 941.8 1297 941.8 L1301 941.4 C1303 937.6 1307 935.3 1311.7 935.3 C1317 935.3 1320.4 938 1322.4 941.7 L1328 946 L1338 956.5 L1350 959.4 L1364 961.4 L1364 963 Z" fill="#e8bc90"/><path d="M1042 950 L1057.5 948 C1060 946 1064 945.4 1068 946 C1074 947 1078 950 1080.8 954.4 L1093.6 961.8 C1098 962 1101 964 1103 967 L1114.7 972.4 L1124.3 978.8 L1074 981.6 C1088 989 1099 1002 1104 1016.6 L1110 1200 H1042 Z" fill="#e8bc90"/><path d="M1104 1016.6 C1110 1012 1120 1010.4 1128 1010.9 C1145 1012 1158 1021 1166 1031 C1174 1041 1179 1050 1181.7 1057.7 C1190 1056 1196 1057 1201 1058.9 C1212 1063 1219 1072 1221.4 1079 L1225 1090.9 C1232 1088 1241 1086 1250.3 1085 C1258 1077 1268 1072.6 1279 1072.6 C1289 1072.6 1298 1075 1305 1079.4 C1305 1070 1306.5 1064 1308.6 1060 C1312 1053 1316 1050 1320 1048.6 C1326 1044 1331 1042.9 1336 1042.9 C1344 1042.9 1351 1044 1356.6 1046.3 C1356 1038 1357 1031 1358.9 1025.7 C1361 1017 1365 1010 1370.3 1005 C1375 1000 1382 995.5 1390 992.6 V1200 H1100 Z" fill="#e8bc90"/><path d="M1042 1006 C1046 999 1052 996.5 1058 996.5 C1062 993.6 1070 993 1076 995.4 C1084 998 1088 1004 1089.4 1010 C1095 1014 1098 1022 1096 1030 V1086 H1042 Z" fill="#bb5134"/><path d="M1042 1160 V1092 C1060 1086 1090 1090 1104 1100 C1112 1104 1117 1112 1115 1122 L1108 1136 L1100 1166 H1042 Z" fill="#cf6f3d"/><path d="M1044 1046 C1046 1036 1056 1030 1064 1030 C1070 1023 1082 1022 1090 1027 C1100 1028 1108 1036 1110 1044.6 C1120 1046 1127.4 1054 1127.4 1063 C1127.4 1070 1123 1074 1120.4 1075.4 C1127 1080 1128.4 1090 1124 1096 C1118 1102 1108 1102 1100 1098 C1094 1104 1084 1106 1076 1101 C1066 1104 1052 1100 1046 1092 C1041 1084 1041 1074 1044 1066 Z" fill="#9a2f2c"/><path d="M1104 1120 C1108 1110 1118 1106 1126 1110 C1134 1104 1146 1108 1150 1116 L1196 1150 L1200 1200 H1100 Z" fill="#cf6f3d"/><path d="M1126 1126 C1124 1116 1130 1108 1140 1105 C1142 1099 1150 1093.5 1158 1094 C1165 1093 1170 1097 1172 1103 C1178 1106 1181 1111 1183 1117 C1190 1122 1193 1130 1192 1137 C1192 1146 1184 1152 1176 1151 L1140 1152 C1130 1150 1124 1140 1126 1126 Z" fill="#9a2f2c"/><ellipse cx="1187" cy="1153" rx="11" ry="13" fill="#9a2f2c"/><path d="M1194 1200 C1196 1170 1212 1150 1232 1150.6 C1240 1150 1246 1154 1250 1160 C1258 1160 1266 1170 1268 1184 L1270 1200 Z" fill="#cf6f3d"/><path d="M1222 1172 C1220 1162 1228 1155 1236 1157 C1244 1155 1251 1162 1250 1170 C1251 1178 1244 1184 1236 1183 C1228 1184 1223 1179 1222 1172 Z" fill="#9a2f2c"/><path d="M1261 1137 C1260 1128 1267 1121.6 1275.7 1121.6 C1283 1121.6 1288 1125 1290.6 1130 C1294 1128.6 1297 1128.6 1300 1129 C1305 1130 1309 1134 1310 1138.6 L1316 1144 L1316 1200 H1270 V1164 C1265 1158 1262 1148 1261 1137 Z" fill="#cf6f3d"/><ellipse cx="1294.5" cy="1162" rx="9" ry="9.5" fill="#9a2f2c"/><path d="M1316 1144 L1320 1136.6 L1327.6 1129 L1339 1118.6 L1352 1115.4 C1352 1108 1354 1104 1357 1100.5 C1359 1095 1362 1091.6 1366.8 1091 C1372 1090.4 1376 1092 1379 1095 C1379 1088 1382 1080 1390 1075 V1200 H1316 Z" fill="#cf6f3d"/><path d="M1042 1165 L1052 1170 L1066 1169 L1068 1158 L1070.6 1146 L1072.6 1144 L1076 1158 L1077 1169 C1084 1172 1094 1172 1102 1167 L1107 1160 L1109.6 1142 L1111.6 1137 L1113.4 1150 L1116 1160 L1120 1163 L1124.3 1179 L1139 1185 L1167.7 1191.6 L1192 1199 L1200 1200 H1042 Z" fill="#0b151d"/><path d="M1268 1200 L1298 1195.8 L1319 1190.5 V1182.6 H1326.5 V1186.3 L1345.6 1183 L1354 1177.8 L1356.6 1170 L1358.3 1162.6 L1360.4 1172.5 L1369 1175 L1381.6 1175.7 L1382 1173 H1390 V1200 Z" fill="#0b151d"/></g><path d="M1072 1180 L1070 1150 L1076 1100 M1071 1140 L1052 1100 M1073 1120 L1062 1066 M1075 1105 L1086 1058 M1074 1125 L1106 1086 M1075 1135 L1112 1104 M1056 1108 L1046 1084" stroke="#1b1820" stroke-width="3.4" fill="none"/><path d="M1156 1196 L1156 1150 M1156 1150 L1150 1118 M1156 1156 L1170 1122 M1156 1162 L1184 1136 M1154 1150 L1134 1136 M1188 1190 L1188 1158 M1236 1198 L1236 1176 M1294 1186 L1294 1160 M1386 1130 L1380 1090 M1388 1170 L1364 1132" stroke="#1b1820" stroke-width="2.6" fill="none"/><path d="M1109 1127 L1124 1168 L1127 1180 L1090 1180 L1096 1160 Z M1274 1172 L1284 1200 H1264 Z M1321.7 1153 L1336 1190 H1306 Z M1357.5 1146 L1376 1190 H1338 Z" fill="#0b151d"/><path d="M1042 1162 L1066 1168 L1126 1173 L1152 1184 L1196 1194 L1226 1200 H1042 Z M1266 1200 L1300 1188 L1390 1180 V1200 Z" fill="#0b151d"/></svg></div><div class="a" style="left:2024px;top:980px;width:134px;height:134px;border:2px solid #5c9ff2;border-radius:5px"></div>
<div class="a" style="left:0px;top:1936px;width:2220px;height:14px;background:linear-gradient(180deg,rgba(0,0,0,0),rgba(0,0,0,.12))"></div>
</body></html>
